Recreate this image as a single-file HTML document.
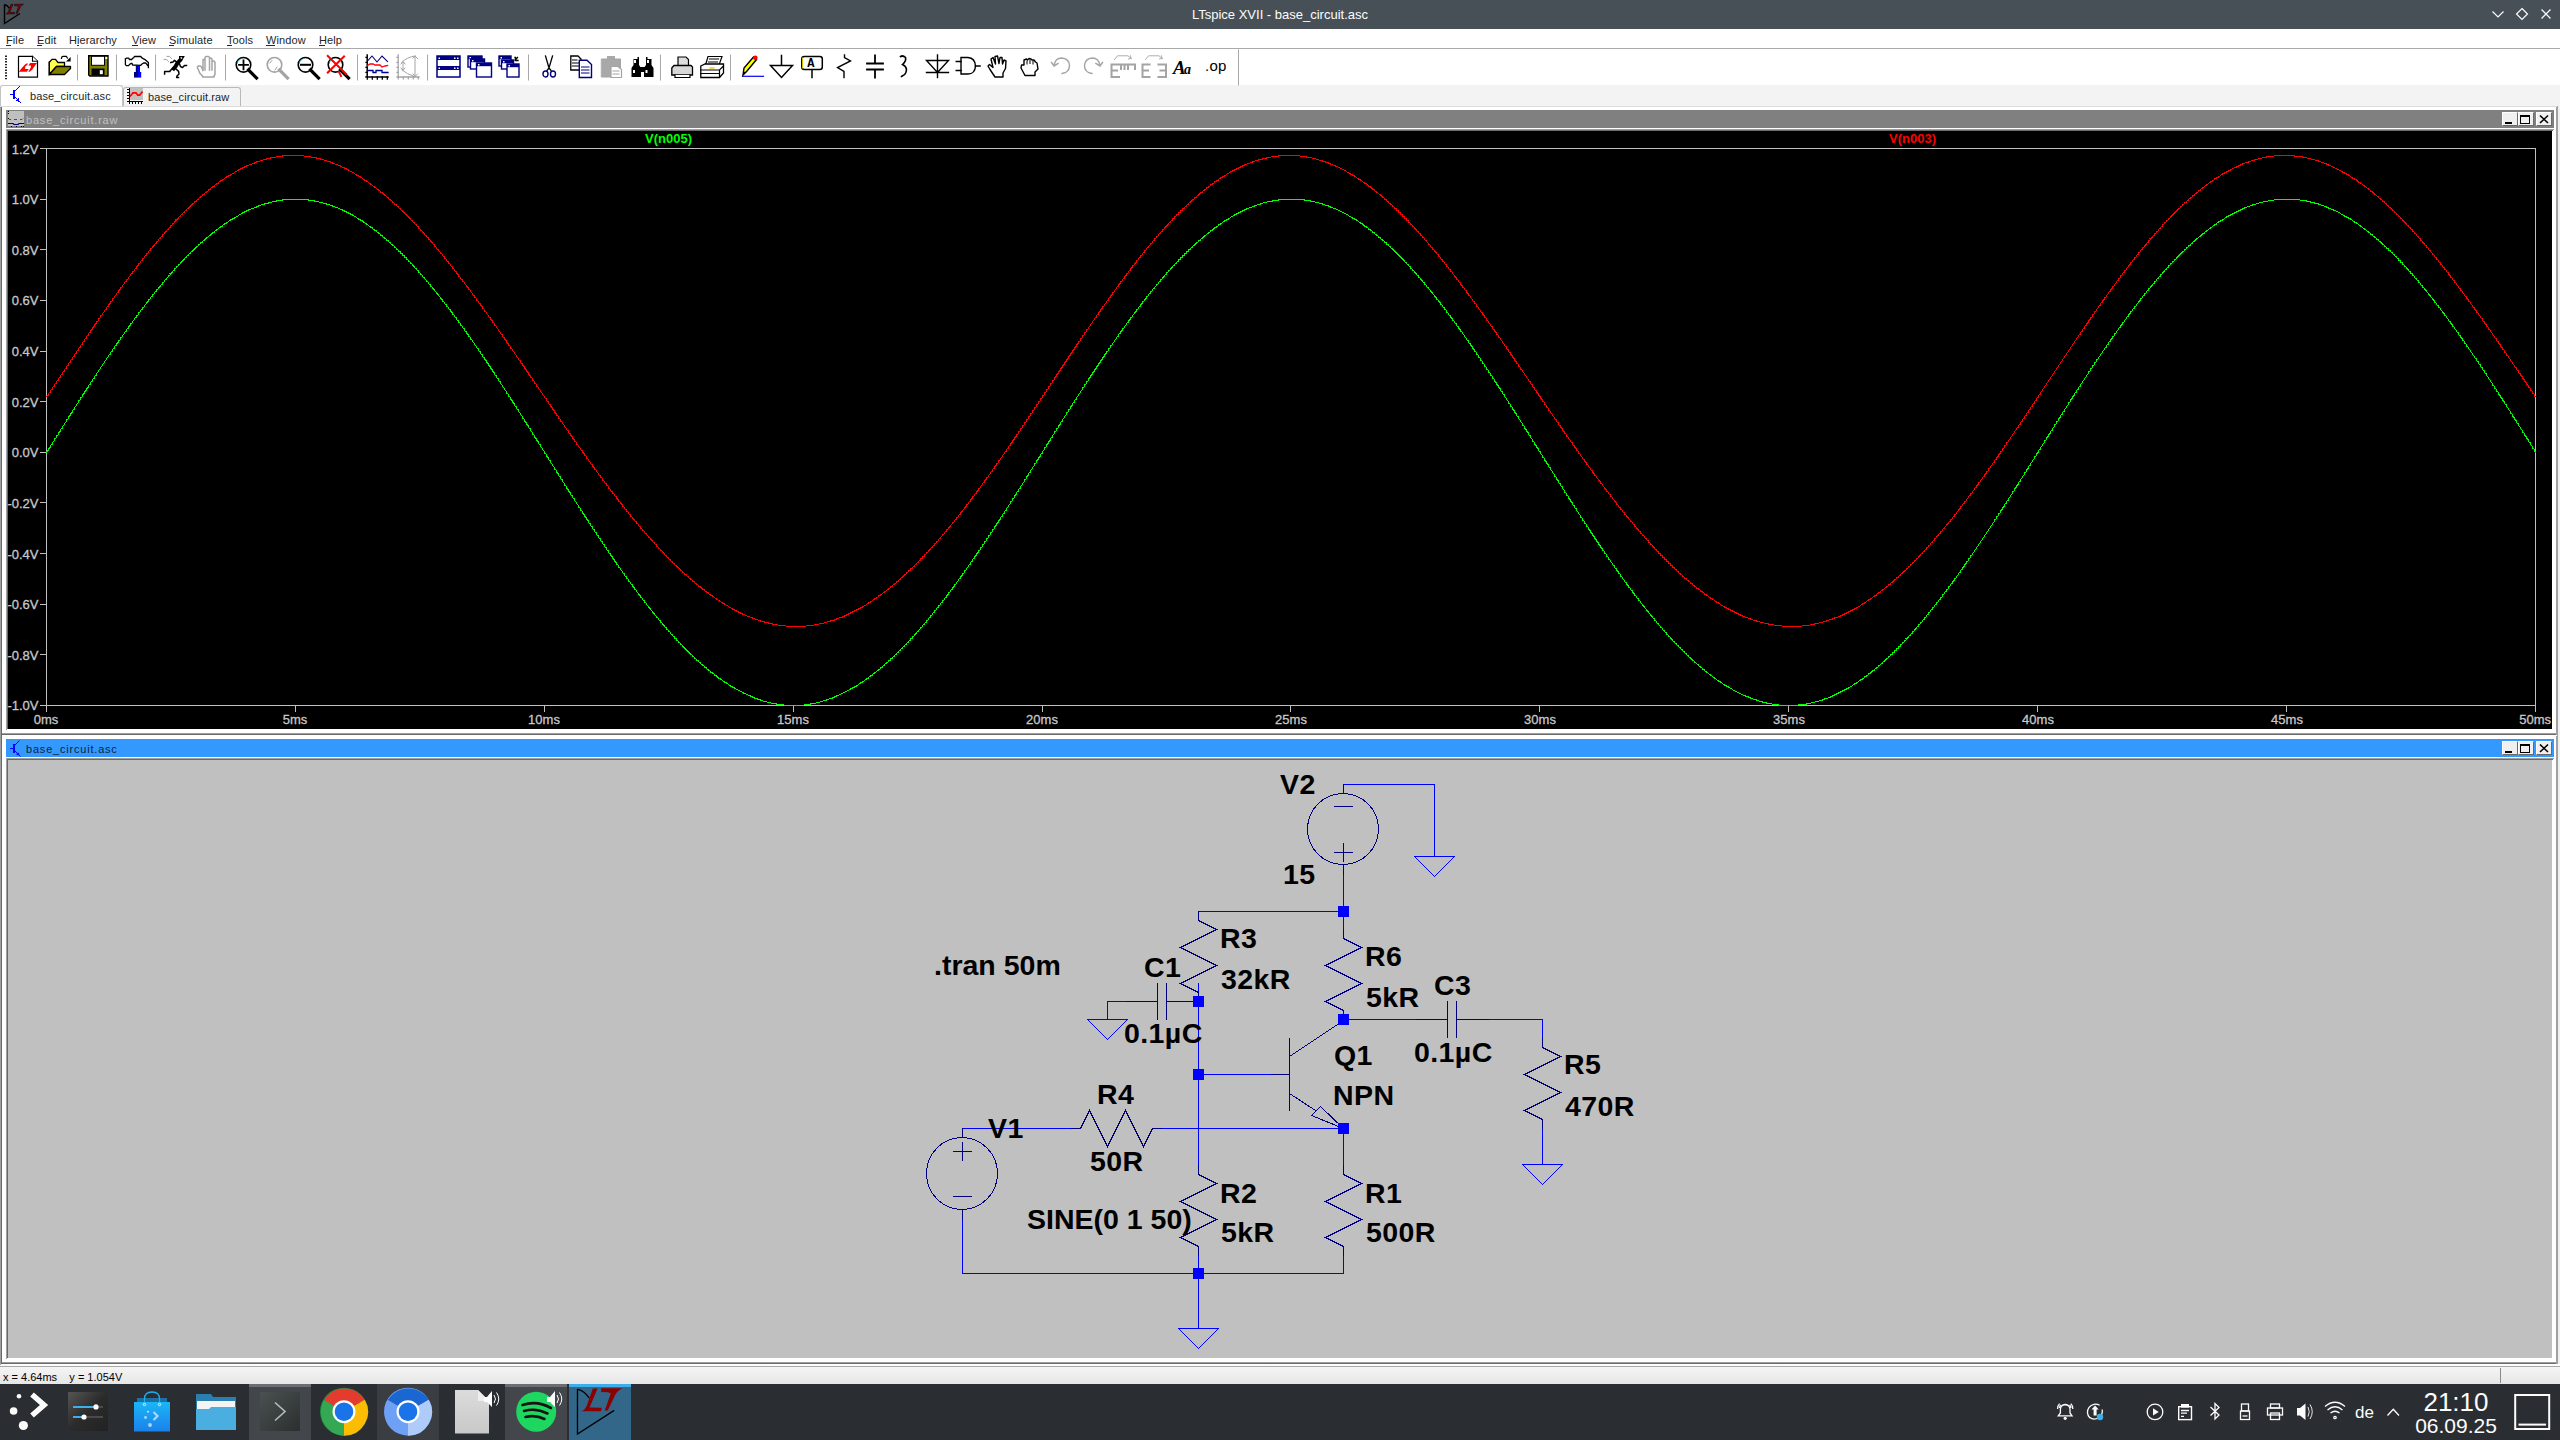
<!DOCTYPE html>
<html><head><meta charset="utf-8"><title>LTspice</title>
<style>
html,body{margin:0;padding:0;width:2560px;height:1440px;overflow:hidden;background:#ffffff;font-family:"Liberation Sans",sans-serif;}
.a{position:absolute;}
svg.full{position:absolute;left:0;top:0;}
</style></head><body>

<div class="a" style="left:0;top:0;width:2560px;height:29px;background:#475057"></div>
<div class="a" style="left:0;top:0;width:2560px;height:29px;line-height:29px;text-align:center;color:#fcfcfc;font-size:13px;">LTspice XVII - base_circuit.asc</div>
<svg class="full" width="2560" height="30" style="left:0;top:0">
<g stroke="#fcfcfc" stroke-width="1.2" fill="none">
<path d="M2492.5 11.5 L2498 17 L2503.5 11.5"/>
<path d="M2522 8.5 L2527.5 14 L2522 19.5 L2516.5 14 Z"/>
<path d="M2541.5 9.5 L2550.5 18.5 M2550.5 9.5 L2541.5 18.5"/>
</g>
<g>
<path d="M4.5 4.5 V23.5 L20 13.5 M4.5 4.5 Q7.5 5.3 9.5 8.3" fill="none" stroke="#000" stroke-width="1.4"/>
<path d="M11 4.3 H13 L9.6 12.3 Q12 12.3 14.8 12.4 L14.4 13.9 H6.2 Q8 12.9 8.5 11.3 Z" fill="#8b0000" stroke="#000" stroke-width="0.5"/>
<path d="M14.5 4.2 H23.5 Q21.2 5.3 20.4 7 L17.3 13.5 H16 L18.6 6.3 Q17 5.6 14.5 5.8 Z" fill="#8b0000" stroke="#000" stroke-width="0.5"/>
</g>
</svg>
<div class="a" style="left:0;top:29px;width:2560px;height:19px;background:#ffffff"></div>
<div class="a" style="left:0;top:48px;width:2560px;height:1px;background:#a9a9a9"></div>
<div class="a" style="left:6px;top:31px;font-size:11px;line-height:18px;color:#232627;letter-spacing:0.1px">File</div>
<div class="a" style="left:37px;top:31px;font-size:11px;line-height:18px;color:#232627;letter-spacing:0.1px">Edit</div>
<div class="a" style="left:69px;top:31px;font-size:11px;line-height:18px;color:#232627;letter-spacing:0.1px">Hierarchy</div>
<div class="a" style="left:132px;top:31px;font-size:11px;line-height:18px;color:#232627;letter-spacing:0.1px">View</div>
<div class="a" style="left:169px;top:31px;font-size:11px;line-height:18px;color:#232627;letter-spacing:0.1px">Simulate</div>
<div class="a" style="left:227px;top:31px;font-size:11px;line-height:18px;color:#232627;letter-spacing:0.1px">Tools</div>
<div class="a" style="left:266px;top:31px;font-size:11px;line-height:18px;color:#232627;letter-spacing:0.1px">Window</div>
<div class="a" style="left:319px;top:31px;font-size:11px;line-height:18px;color:#232627;letter-spacing:0.1px">Help</div>
<div class="a" style="left:6px;top:45px;width:5px;height:1px;background:#232627"></div>
<div class="a" style="left:37px;top:45px;width:5px;height:1px;background:#232627"></div>
<div class="a" style="left:77px;top:45px;width:2px;height:1px;background:#232627"></div>
<div class="a" style="left:132px;top:45px;width:6px;height:1px;background:#232627"></div>
<div class="a" style="left:169px;top:45px;width:5px;height:1px;background:#232627"></div>
<div class="a" style="left:227px;top:45px;width:5px;height:1px;background:#232627"></div>
<div class="a" style="left:266px;top:45px;width:9px;height:1px;background:#232627"></div>
<div class="a" style="left:319px;top:45px;width:6px;height:1px;background:#232627"></div>
<div class="a" style="left:0;top:49px;width:2560px;height:36px;background:#ffffff"></div>
<div class="a" style="left:0;top:85px;width:2560px;height:21px;background:#f3f3f3"></div>
<div class="a" style="left:0px;top:85px;width:123px;height:22px;background:#ffffff;border:1px solid #c4c4c4;border-bottom:none;border-radius:3px 3px 0 0;box-sizing:border-box"></div>
<div class="a" style="left:123px;top:87px;width:118px;height:19px;background:#f3f3f3;border:1px solid #b8b8b8;border-bottom:none;border-radius:3px 3px 0 0;box-sizing:border-box"></div>
<div class="a" style="left:30px;top:89px;font-size:11px;line-height:15px;color:#232627;letter-spacing:0.12px">base_circuit.asc</div>
<div class="a" style="left:148px;top:90px;font-size:11px;line-height:15px;color:#232627;letter-spacing:0.12px">base_circuit.raw</div>
<svg class="full" width="260" height="110" style="left:0;top:0" shape-rendering="crispEdges">
<g fill="#0000ff">
<rect x="13" y="90" width="2" height="9"/><rect x="10" y="94" width="3" height="1"/>
<rect x="15" y="90" width="1" height="1"/><rect x="16" y="89" width="1" height="1"/><rect x="17" y="88" width="1" height="1"/><rect x="18" y="87" width="1" height="1"/><rect x="19" y="86" width="1" height="1"/>
<rect x="15" y="97" width="1" height="1"/><rect x="16" y="98" width="1" height="1"/><rect x="17" y="99" width="2" height="2"/><rect x="16" y="100" width="2" height="1"/><rect x="18" y="98" width="1" height="2"/><rect x="18" y="101" width="2" height="1"/><rect x="20" y="102" width="1" height="1"/>
</g>
<rect x="130" y="88" width="13" height="12" fill="#c0c0c0"/>
<g fill="#000">
<rect x="129" y="88" width="1" height="16"/><rect x="127" y="101" width="16" height="1"/>
<rect x="127" y="89" width="2" height="1"/><rect x="127" y="92" width="2" height="1"/><rect x="127" y="95" width="2" height="1"/><rect x="127" y="98" width="2" height="1"/>
<rect x="132" y="102" width="1" height="2"/><rect x="135" y="102" width="1" height="2"/><rect x="138" y="102" width="1" height="2"/><rect x="141" y="102" width="1" height="2"/>
</g>
</svg>
<svg class="full" width="260" height="110" style="left:0;top:0"><path d="M130 96.5 L133 92.8 H136 L137.8 95.2 H139.7 L142.5 91.5" fill="none" stroke="#ff0000" stroke-width="1.7"/></svg>
<div class="a" style="left:0;top:1364px;width:2560px;height:2px;background:#fafafa"></div>
<div class="a" style="left:0;top:1366px;width:2560px;height:1px;background:#a8a8a8"></div>
<div class="a" style="left:0;top:1367px;width:2560px;height:17px;background:linear-gradient(#f5f5f5,#e6e6e6)"></div>
<div class="a" style="left:3px;top:1370px;font-size:11px;line-height:14px;color:#000;white-space:pre">x = 4.64ms    y = 1.054V</div>
<div class="a" style="left:2500px;top:1368px;width:1px;height:15px;background:#8a8a8a"></div>
<div class="a" style="left:0;top:106px;width:2560px;height:1259px;background:#ffffff"></div>
<div class="a" style="left:0;top:106px;width:1px;height:1259px;background:#a0a0a0"></div>
<div class="a" style="left:1px;top:106px;width:1px;height:1258px;background:#696969"></div>
<div class="a" style="left:0;top:106px;width:2560px;height:1px;background:#dcdcdc"></div>
<div class="a" style="left:2557px;top:106px;width:1px;height:1258px;background:#a0a0a0"></div>
<div class="a" style="left:2558px;top:106px;width:2px;height:1258px;background:#f0f0f0"></div>
<div class="a" style="left:2px;top:107px;width:2555px;height:628px;background:#ffffff"></div>
<div class="a" style="left:2px;top:733px;width:2555px;height:1px;background:#a0a0a0"></div>
<div class="a" style="left:2px;top:734px;width:2555px;height:1px;background:#696969"></div>
<div class="a" style="left:2556px;top:107px;width:1px;height:628px;background:#a0a0a0"></div>
<div class="a" style="left:6px;top:110px;width:2548px;height:18px;background:#808080"></div>
<div class="a" style="left:26px;top:112px;font-size:11px;line-height:16px;color:#c0c0c0;letter-spacing:0.8px">base_circuit.raw</div>
<div class="a" style="left:2502px;top:112px;width:16px;height:14px;background:#f0f0f0;box-sizing:border-box;border-top:1px solid #ffffff;border-left:1px solid #ffffff;border-right:1px solid #696969;border-bottom:1px solid #696969"></div>
<div class="a" style="left:2518px;top:112px;width:16px;height:14px;background:#f0f0f0;box-sizing:border-box;border-top:1px solid #ffffff;border-left:1px solid #ffffff;border-right:1px solid #696969;border-bottom:1px solid #696969"></div>
<div class="a" style="left:2536px;top:112px;width:16px;height:14px;background:#f0f0f0;box-sizing:border-box;border-top:1px solid #ffffff;border-left:1px solid #ffffff;border-right:1px solid #696969;border-bottom:1px solid #696969"></div>
<svg class="full" width="2560" height="130" style="left:0;top:0">
<rect x="2505" y="122" width="7" height="2" fill="#000"/>
<rect x="2520.5" y="115.5" width="9" height="8" fill="none" stroke="#000" stroke-width="1"/>
<rect x="2520" y="115" width="10" height="2" fill="#000"/>
<path d="M2540 115.5 L2548 123 M2548 115.5 L2540 123" stroke="#000" stroke-width="1.6"/>
<rect x="8" y="111" width="16" height="15" fill="#c0c0c0"/>
<g fill="#000"><rect x="8" y="111" width="1" height="1"/><rect x="8" y="113" width="1" height="1"/><rect x="8" y="118" width="1" height="1"/><rect x="8" y="123" width="1" height="1"/>
<rect x="11" y="126" width="1" height="1"/><rect x="16" y="126" width="1" height="1"/><rect x="21" y="126" width="1" height="1"/><rect x="23" y="126" width="1" height="1"/></g>
<path d="M9 119.5 h2 m3 0 h3 m3 0 h2 l1 -1" stroke="#ff0000" stroke-width="1" fill="none"/>
<path d="M9 123.5 h4 l1 1 h4 l1 -1 h5" stroke="#000080" stroke-width="1.2" fill="none"/>
</svg>
<div class="a" style="left:6px;top:129px;width:2548px;height:1px;background:#a0a0a0"></div>
<div class="a" style="left:6px;top:130px;width:2547px;height:1px;background:#696969"></div>
<div class="a" style="left:6px;top:129px;width:1px;height:601px;background:#a0a0a0"></div>
<div class="a" style="left:7px;top:130px;width:1px;height:599px;background:#696969"></div>
<div class="a" style="left:8px;top:131px;width:2544px;height:598px;background:#000000"></div>
<div class="a" style="left:2px;top:736px;width:2555px;height:628px;background:#ffffff"></div>
<div class="a" style="left:2px;top:1362px;width:2555px;height:1px;background:#a0a0a0"></div>
<div class="a" style="left:2px;top:1363px;width:2555px;height:1px;background:#696969"></div>
<div class="a" style="left:2556px;top:736px;width:1px;height:628px;background:#a0a0a0"></div>
<div class="a" style="left:6px;top:739px;width:2548px;height:18px;background:#3399ff"></div>
<div class="a" style="left:26px;top:741px;font-size:11px;line-height:16px;color:#10233a;letter-spacing:0.8px">base_circuit.asc</div>
<div class="a" style="left:2502px;top:741px;width:16px;height:14px;background:#f0f0f0;box-sizing:border-box;border-top:1px solid #ffffff;border-left:1px solid #ffffff;border-right:1px solid #696969;border-bottom:1px solid #696969"></div>
<div class="a" style="left:2518px;top:741px;width:16px;height:14px;background:#f0f0f0;box-sizing:border-box;border-top:1px solid #ffffff;border-left:1px solid #ffffff;border-right:1px solid #696969;border-bottom:1px solid #696969"></div>
<div class="a" style="left:2536px;top:741px;width:16px;height:14px;background:#f0f0f0;box-sizing:border-box;border-top:1px solid #ffffff;border-left:1px solid #ffffff;border-right:1px solid #696969;border-bottom:1px solid #696969"></div>
<svg class="full" width="2560" height="759" style="left:0;top:0">
<rect x="2505" y="751" width="7" height="2" fill="#000"/>
<rect x="2520.5" y="744.5" width="9" height="8" fill="none" stroke="#000" stroke-width="1"/>
<rect x="2520" y="744" width="10" height="2" fill="#000"/>
<path d="M2540 744.5 L2548 752 M2548 744.5 L2540 752" stroke="#000" stroke-width="1.6"/>
<g fill="#0000ff"><rect x="13" y="744" width="2" height="9"/><rect x="10" y="748" width="3" height="1"/>
<path d="M15 745 L19.5 740.5" stroke="#0000ff" stroke-width="1"/><path d="M15 751 L20.5 756.5" stroke="#0000ff" stroke-width="1"/>
<path d="M16 754.5 L18.5 752.5 L19.5 755.5 Z"/></g>
</svg>
<div class="a" style="left:6px;top:758px;width:2548px;height:1px;background:#a0a0a0"></div>
<div class="a" style="left:6px;top:759px;width:2547px;height:1px;background:#696969"></div>
<div class="a" style="left:6px;top:758px;width:1px;height:601px;background:#a0a0a0"></div>
<div class="a" style="left:7px;top:759px;width:1px;height:599px;background:#696969"></div>
<div class="a" style="left:8px;top:760px;width:2544px;height:598px;background:#c0c0c0"></div>
<svg class="full" width="2560" height="740" style="left:0;top:0" shape-rendering="crispEdges">
<path d="M46.5 148.5 H2535.5 V705.5 H46.5 Z" stroke="#c0c0c0" stroke-width="1" fill="none"/>
<path d="M40 148.5 H46.5 M40 199.5 H46.5 M40 249.5 H46.5 M40 300.5 H46.5 M40 351.5 H46.5 M40 401.5 H46.5 M40 452.5 H46.5 M40 502.5 H46.5 M40 553.5 H46.5 M40 604.5 H46.5 M40 654.5 H46.5 M40 705.5 H46.5 M46.5 705.5 V712 M295.5 705.5 V712 M544.5 705.5 V712 M793.5 705.5 V712 M1042.5 705.5 V712 M1290.5 705.5 V712 M1539.5 705.5 V712 M1788.5 705.5 V712 M2037.5 705.5 V712 M2286.5 705.5 V712 M2535.5 705.5 V712" stroke="#c0c0c0" stroke-width="1" fill="none"/>
<polyline points="46 397.0 48 395.5 48 394.0 50 392.4 50 390.9 52 389.4 52 387.9 54 386.4 54 384.9 56 383.4 56 381.9 58 380.4 58 378.9 60 377.3 60 375.8 62 374.3 62 372.8 64 371.3 64 369.8 66 368.3 66 366.8 68 365.3 68 363.8 70 362.3 70 360.8 72 359.3 72 357.8 74 356.3 74 354.8 76 353.3 76 351.8 78 350.3 78 348.8 80 347.3 80 345.8 82 344.3 82 342.9 84 341.4 84 339.9 86 338.4 86 336.9 88 335.5 88 334.0 90 332.5 90 331.0 92 329.6 92 328.1 94 326.6 94 325.2 96 323.7 96 322.3 98 320.8 98 319.4 100 317.9 100 316.5 102 315.0 102 313.6 104 312.2 104 310.7 106 309.3 106 307.9 108 306.5 108 305.0 110 303.6 110 302.2 112 300.8 112 299.4 114 298.0 114 296.6 116 295.2 116 293.8 118 292.4 118 291.1 120 289.7 120 288.3 122 286.9 122 285.6 124 284.2 124 282.9 126 281.5 126 280.2 128 278.8 128 277.5 130 276.2 130 274.8 132 273.5 132 272.2 134 270.9 134 269.6 136 268.3 136 267.0 138 265.7 138 264.4 140 263.1 140 261.8 142 260.5 142 259.3 144 258.0 144 256.8 146 255.5 146 254.3 148 253.0 148 251.8 150 250.6 150 249.3 152 248.1 152 246.9 154 245.7 154 244.5 156 243.3 156 242.1 158 240.9 158 239.8 160 238.6 160 237.4 162 236.3 162 235.1 164 234.0 164 232.9 166 231.7 166 230.6 168 229.5 168 228.4 170 227.3 170 226.2 172 225.1 172 224.0 174 222.9 174 221.9 176 220.8 176 219.8 178 218.7 178 217.7 180 216.6 180 215.6 182 214.6 182 213.6 184 212.6 184 211.6 186 210.6 186 209.6 188 208.7 188 207.7 190 206.7 190 205.8 192 204.8 192 203.9 194 203.0 194 202.1 196 201.2 196 200.3 198 199.4 198 198.5 200 197.6 200 196.7 202 195.9 202 195.0 204 194.2 204 193.3 206 192.5 206 191.7 208 190.9 208 190.1 210 189.3 210 188.5 212 187.7 212 187.0 214 186.2 214 185.4 216 184.7 216 184.0 218 183.2 218 182.5 220 181.8 220 181.1 222 180.4 222 179.7 224 179.1 224 178.4 226 177.8 226 177.1 228 176.5 228 175.9 230 175.2 230 174.6 232 174.0 232 173.4 234 172.9 234 172.3 236 171.7 236 171.2 238 170.6 238 170.1 240 169.6 240 169.0 242 168.5 242 168.0 244 167.5 244 167.1 246 166.6 246 166.1 248 165.7 248 165.3 250 164.8 250 164.4 252 164.0 252 163.6 254 163.2 254 162.8 256 162.4 256 162.1 258 161.7 258 161.4 260 161.0 260 160.7 262 160.4 262 160.1 264 159.8 264 159.5 266 159.2 266 159.0 268 158.7 268 158.5 270 158.2 270 158.0 272 157.8 272 157.6 274 157.4 274 157.2 276 157.0 276 156.8 278 156.7 278 156.5 280 156.4 280 156.2 282 156.1 282 156.0 284 155.9 284 155.8 286 155.7 286 155.7 288 155.6 288 155.6 290 155.5 290 155.5 292 155.5 292 155.5 294 155.5 294 155.5 296 155.5 296 155.5 298 155.6 298 155.6 300 155.7 300 155.7 302 155.8 302 155.9 304 156.0 304 156.1 306 156.2 306 156.3 308 156.5 308 156.6 310 156.8 310 156.9 312 157.1 312 157.3 314 157.5 314 157.7 316 157.9 316 158.1 318 158.4 318 158.6 320 158.9 320 159.1 322 159.4 322 159.7 324 160.0 324 160.3 326 160.6 326 160.9 328 161.2 328 161.6 330 161.9 330 162.3 332 162.7 332 163.0 334 163.4 334 163.8 336 164.2 336 164.6 338 165.1 338 165.5 340 165.9 340 166.4 342 166.9 342 167.3 344 167.8 344 168.3 346 168.8 346 169.3 348 169.8 348 170.3 350 170.9 350 171.4 352 172.0 352 172.5 354 173.1 354 173.7 356 174.3 356 174.9 358 175.5 358 176.1 360 176.7 360 177.3 362 178.0 362 178.6 364 179.3 364 180.0 366 180.6 366 181.3 368 182.0 368 182.7 370 183.4 370 184.1 372 184.9 372 185.6 374 186.3 374 187.1 376 187.9 376 188.6 378 189.4 378 190.2 380 191.0 380 191.8 382 192.6 382 193.4 384 194.2 384 195.1 386 195.9 386 196.7 388 197.6 388 198.5 390 199.3 390 200.2 392 201.1 392 202.0 394 202.9 394 203.8 396 204.7 396 205.6 398 206.6 398 207.5 400 208.5 400 209.4 402 210.4 402 211.3 404 212.3 404 213.3 406 214.3 406 215.3 408 216.3 408 217.3 410 218.3 410 219.3 412 220.4 412 221.4 414 222.5 414 223.5 416 224.6 416 225.6 418 226.7 418 227.8 420 228.9 420 229.9 422 231.0 422 232.1 424 233.3 424 234.4 426 235.5 426 236.6 428 237.7 428 238.9 430 240.0 430 241.2 432 242.3 432 243.5 434 244.7 434 245.8 436 247.0 436 248.2 438 249.4 438 250.6 440 251.8 440 253.0 442 254.2 442 255.4 444 256.7 444 257.9 446 259.1 446 260.4 448 261.6 448 262.8 450 264.1 450 265.4 452 266.6 452 267.9 454 269.2 454 270.4 456 271.7 456 273.0 458 274.3 458 275.6 460 276.9 460 278.2 462 279.5 462 280.8 464 282.1 464 283.4 466 284.8 466 286.1 468 287.4 468 288.8 470 290.1 470 291.4 472 292.8 472 294.1 474 295.5 474 296.8 476 298.2 476 299.6 478 300.9 478 302.3 480 303.7 480 305.1 482 306.4 482 307.8 484 309.2 484 310.6 486 312.0 486 313.4 488 314.8 488 316.2 490 317.6 490 319.0 492 320.4 492 321.8 494 323.2 494 324.6 496 326.1 496 327.5 498 328.9 498 330.3 500 331.8 500 333.2 502 334.6 502 336.1 504 337.5 504 338.9 506 340.4 506 341.8 508 343.3 508 344.7 510 346.1 510 347.6 512 349.0 512 350.5 514 351.9 514 353.4 516 354.8 516 356.3 518 357.8 518 359.2 520 360.7 520 362.1 522 363.6 522 365.0 524 366.5 524 368.0 526 369.4 526 370.9 528 372.4 528 373.8 530 375.3 530 376.8 532 378.2 532 379.7 534 381.1 534 382.6 536 384.1 536 385.5 538 387.0 538 388.5 540 389.9 540 391.4 542 392.9 542 394.3 544 395.8 544 397.3 546 398.7 546 400.2 548 401.7 548 403.1 550 404.6 550 406.0 552 407.5 552 409.0 554 410.4 554 411.9 556 413.3 556 414.8 558 416.2 558 417.7 560 419.1 560 420.6 562 422.0 562 423.5 564 424.9 564 426.4 566 427.8 566 429.2 568 430.7 568 432.1 570 433.6 570 435.0 572 436.4 572 437.8 574 439.3 574 440.7 576 442.1 576 443.5 578 445.0 578 446.4 580 447.8 580 449.2 582 450.6 582 452.0 584 453.4 584 454.8 586 456.2 586 457.6 588 459.0 588 460.4 590 461.8 590 463.2 592 464.6 592 465.9 594 467.3 594 468.7 596 470.1 596 471.4 598 472.8 598 474.2 600 475.5 600 476.9 602 478.2 602 479.6 604 480.9 604 482.2 606 483.6 606 484.9 608 486.2 608 487.6 610 488.9 610 490.2 612 491.5 612 492.8 614 494.1 614 495.4 616 496.7 616 498.0 618 499.3 618 500.6 620 501.9 620 503.1 622 504.4 622 505.7 624 506.9 624 508.2 626 509.5 626 510.7 628 512.0 628 513.2 630 514.4 630 515.7 632 516.9 632 518.1 634 519.3 634 520.5 636 521.7 636 522.9 638 524.1 638 525.3 640 526.5 640 527.7 642 528.9 642 530.0 644 531.2 644 532.3 646 533.5 646 534.6 648 535.8 648 536.9 650 538.1 650 539.2 652 540.3 652 541.4 654 542.5 654 543.6 656 544.7 656 545.8 658 546.9 658 548.0 660 549.0 660 550.1 662 551.2 662 552.2 664 553.3 664 554.3 666 555.4 666 556.4 668 557.4 668 558.4 670 559.4 670 560.4 672 561.4 672 562.4 674 563.4 674 564.4 676 565.4 676 566.3 678 567.3 678 568.2 680 569.2 680 570.1 682 571.1 682 572.0 684 572.9 684 573.8 686 574.7 686 575.6 688 576.5 688 577.4 690 578.3 690 579.1 692 580.0 692 580.9 694 581.7 694 582.6 696 583.4 696 584.2 698 585.0 698 585.9 700 586.7 700 587.5 702 588.2 702 589.0 704 589.8 704 590.6 706 591.3 706 592.1 708 592.8 708 593.6 710 594.3 710 595.0 712 595.7 712 596.4 714 597.1 714 597.8 716 598.5 716 599.2 718 599.9 718 600.5 720 601.2 720 601.8 722 602.5 722 603.1 724 603.7 724 604.3 726 604.9 726 605.5 728 606.1 728 606.7 730 607.3 730 607.8 732 608.4 732 609.0 734 609.5 734 610.0 736 610.6 736 611.1 738 611.6 738 612.1 740 612.6 740 613.1 742 613.5 742 614.0 744 614.5 744 614.9 746 615.3 746 615.8 748 616.2 748 616.6 750 617.0 750 617.4 752 617.8 752 618.2 754 618.6 754 618.9 756 619.3 756 619.6 758 620.0 758 620.3 760 620.6 760 621.0 762 621.3 762 621.6 764 621.8 764 622.1 766 622.4 766 622.7 768 622.9 768 623.2 770 623.4 770 623.6 772 623.8 772 624.0 774 624.2 774 624.4 776 624.6 776 624.8 778 625.0 778 625.1 780 625.3 780 625.4 782 625.5 782 625.7 784 625.8 784 625.9 786 626.0 786 626.1 788 626.1 788 626.2 790 626.3 790 626.3 792 626.4 792 626.4 794 626.4 794 626.4 796 626.4 796 626.4 798 626.4 798 626.4 800 626.4 800 626.3 802 626.3 802 626.2 804 626.2 804 626.1 806 626.0 806 625.9 808 625.8 808 625.7 810 625.6 810 625.5 812 625.3 812 625.2 814 625.0 814 624.9 816 624.7 816 624.5 818 624.3 818 624.1 820 623.9 820 623.7 822 623.5 822 623.2 824 623.0 824 622.7 826 622.5 826 622.2 828 621.9 828 621.6 830 621.3 830 621.0 832 620.7 832 620.4 834 620.1 834 619.7 836 619.4 836 619.0 838 618.7 838 618.3 840 617.9 840 617.5 842 617.1 842 616.7 844 616.3 844 615.9 846 615.4 846 615.0 848 614.5 848 614.1 850 613.6 850 613.1 852 612.6 852 612.1 854 611.6 854 611.1 856 610.6 856 610.0 858 609.5 858 609.0 860 608.4 860 607.8 862 607.3 862 606.7 864 606.1 864 605.5 866 604.9 866 604.3 868 603.7 868 603.0 870 602.4 870 601.7 872 601.1 872 600.4 874 599.7 874 599.1 876 598.4 876 597.7 878 597.0 878 596.2 880 595.5 880 594.8 882 594.1 882 593.3 884 592.6 884 591.8 886 591.0 886 590.3 888 589.5 888 588.7 890 587.9 890 587.1 892 586.2 892 585.4 894 584.6 894 583.7 896 582.9 896 582.0 898 581.2 898 580.3 900 579.4 900 578.5 902 577.7 902 576.8 904 575.8 904 574.9 906 574.0 906 573.1 908 572.1 908 571.2 910 570.2 910 569.3 912 568.3 912 567.3 914 566.4 914 565.4 916 564.4 916 563.4 918 562.4 918 561.4 920 560.3 920 559.3 922 558.3 922 557.2 924 556.2 924 555.1 926 554.1 926 553.0 928 551.9 928 550.8 930 549.8 930 548.7 932 547.6 932 546.4 934 545.3 934 544.2 936 543.1 936 542.0 938 540.8 938 539.7 940 538.5 940 537.4 942 536.2 942 535.0 944 533.8 944 532.7 946 531.5 946 530.3 948 529.1 948 527.9 950 526.7 950 525.5 952 524.2 952 523.0 954 521.8 954 520.5 956 519.3 956 518.0 958 516.8 958 515.5 960 514.3 960 513.0 962 511.7 962 510.4 964 509.2 964 507.9 966 506.6 966 505.3 968 504.0 968 502.7 970 501.3 970 500.0 972 498.7 972 497.4 974 496.0 974 494.7 976 493.4 976 492.0 978 490.7 978 489.3 980 488.0 980 486.6 982 485.2 982 483.9 984 482.5 984 481.1 986 479.7 986 478.3 988 476.9 988 475.6 990 474.2 990 472.8 992 471.4 992 469.9 994 468.5 994 467.1 996 465.7 996 464.3 998 462.9 998 461.4 1000 460.0 1000 458.6 1002 457.1 1002 455.7 1004 454.2 1004 452.8 1006 451.4 1006 449.9 1008 448.4 1008 447.0 1010 445.5 1010 444.1 1012 442.6 1012 441.1 1014 439.7 1014 438.2 1016 436.7 1016 435.3 1018 433.8 1018 432.3 1020 430.8 1020 429.3 1022 427.9 1022 426.4 1024 424.9 1024 423.4 1026 421.9 1026 420.4 1028 418.9 1028 417.4 1030 415.9 1030 414.4 1032 412.9 1032 411.4 1034 409.9 1034 408.4 1036 406.9 1036 405.4 1038 403.9 1038 402.4 1040 400.9 1040 399.4 1042 397.9 1042 396.4 1044 394.9 1044 393.4 1046 391.8 1046 390.3 1048 388.8 1048 387.3 1050 385.8 1050 384.3 1052 382.8 1052 381.3 1054 379.8 1054 378.3 1056 376.7 1056 375.2 1058 373.7 1058 372.2 1060 370.7 1060 369.2 1062 367.7 1062 366.2 1064 364.7 1064 363.2 1066 361.7 1066 360.2 1068 358.7 1068 357.2 1070 355.7 1070 354.2 1072 352.7 1072 351.2 1074 349.7 1074 348.2 1076 346.7 1076 345.2 1078 343.7 1078 342.3 1080 340.8 1080 339.3 1082 337.8 1082 336.3 1084 334.9 1084 333.4 1086 331.9 1086 330.5 1088 329.0 1088 327.5 1090 326.1 1090 324.6 1092 323.1 1092 321.7 1094 320.2 1094 318.8 1096 317.4 1096 315.9 1098 314.5 1098 313.0 1100 311.6 1100 310.2 1102 308.7 1102 307.3 1104 305.9 1104 304.5 1106 303.1 1106 301.7 1108 300.3 1108 298.9 1110 297.5 1110 296.1 1112 294.7 1112 293.3 1114 291.9 1114 290.5 1116 289.1 1116 287.8 1118 286.4 1118 285.0 1120 283.7 1120 282.3 1122 281.0 1122 279.6 1124 278.3 1124 277.0 1126 275.6 1126 274.3 1128 273.0 1128 271.7 1130 270.3 1130 269.0 1132 267.7 1132 266.4 1134 265.1 1134 263.9 1136 262.6 1136 261.3 1138 260.0 1138 258.8 1140 257.5 1140 256.3 1142 255.0 1142 253.8 1144 252.5 1144 251.3 1146 250.1 1146 248.8 1148 247.6 1148 246.4 1150 245.2 1150 244.0 1152 242.8 1152 241.6 1154 240.5 1154 239.3 1156 238.1 1156 237.0 1158 235.8 1158 234.7 1160 233.5 1160 232.4 1162 231.3 1162 230.2 1164 229.0 1164 227.9 1166 226.8 1166 225.7 1168 224.7 1168 223.6 1170 222.5 1170 221.4 1172 220.4 1172 219.3 1174 218.3 1174 217.3 1176 216.2 1176 215.2 1178 214.2 1178 213.2 1180 212.2 1180 211.2 1182 210.2 1182 209.2 1184 208.3 1184 207.3 1186 206.4 1186 205.4 1188 204.5 1188 203.5 1190 202.6 1190 201.7 1192 200.8 1192 199.9 1194 199.0 1194 198.1 1196 197.3 1196 196.4 1198 195.5 1198 194.7 1200 193.8 1200 193.0 1202 192.2 1202 191.4 1204 190.6 1204 189.8 1206 189.0 1206 188.2 1208 187.4 1208 186.6 1210 185.9 1210 185.1 1212 184.4 1212 183.7 1214 183.0 1214 182.2 1216 181.5 1216 180.8 1218 180.2 1218 179.5 1220 178.8 1220 178.2 1222 177.5 1222 176.9 1224 176.2 1224 175.6 1226 175.0 1226 174.4 1228 173.8 1228 173.2 1230 172.6 1230 172.1 1232 171.5 1232 170.9 1234 170.4 1234 169.9 1236 169.4 1236 168.8 1238 168.3 1238 167.8 1240 167.4 1240 166.9 1242 166.4 1242 166.0 1244 165.5 1244 165.1 1246 164.6 1246 164.2 1248 163.8 1248 163.4 1250 163.0 1250 162.7 1252 162.3 1252 161.9 1254 161.6 1254 161.2 1256 160.9 1256 160.6 1258 160.3 1258 160.0 1260 159.7 1260 159.4 1262 159.1 1262 158.9 1264 158.6 1264 158.4 1266 158.1 1266 157.9 1268 157.7 1268 157.5 1270 157.3 1270 157.1 1272 156.9 1272 156.8 1274 156.6 1274 156.5 1276 156.3 1276 156.2 1278 156.1 1278 156.0 1280 155.9 1280 155.8 1282 155.7 1282 155.7 1284 155.6 1284 155.6 1286 155.5 1286 155.5 1288 155.5 1288 155.5 1290 155.5 1290 155.5 1292 155.5 1292 155.5 1294 155.6 1294 155.6 1296 155.7 1296 155.8 1298 155.8 1298 155.9 1300 156.0 1300 156.1 1302 156.3 1302 156.4 1304 156.5 1304 156.7 1306 156.8 1306 157.0 1308 157.2 1308 157.4 1310 157.6 1310 157.8 1312 158.0 1312 158.2 1314 158.5 1314 158.7 1316 159.0 1316 159.2 1318 159.5 1318 159.8 1320 160.1 1320 160.4 1322 160.7 1322 161.0 1324 161.4 1324 161.7 1326 162.1 1326 162.4 1328 162.8 1328 163.2 1330 163.6 1330 164.0 1332 164.4 1332 164.8 1334 165.2 1334 165.7 1336 166.1 1336 166.6 1338 167.0 1338 167.5 1340 168.0 1340 168.5 1342 169.0 1342 169.5 1344 170.0 1344 170.6 1346 171.1 1346 171.6 1348 172.2 1348 172.8 1350 173.3 1350 173.9 1352 174.5 1352 175.1 1354 175.7 1354 176.3 1356 177.0 1356 177.6 1358 178.2 1358 178.9 1360 179.6 1360 180.2 1362 180.9 1362 181.6 1364 182.3 1364 183.0 1366 183.7 1366 184.4 1368 185.2 1368 185.9 1370 186.6 1370 187.4 1372 188.2 1372 188.9 1374 189.7 1374 190.5 1376 191.3 1376 192.1 1378 192.9 1378 193.7 1380 194.6 1380 195.4 1382 196.2 1382 197.1 1384 197.9 1384 198.8 1386 199.7 1386 200.6 1388 201.5 1388 202.4 1390 203.3 1390 204.2 1392 205.1 1392 206.0 1394 207.0 1394 207.9 1396 208.8 1396 209.8 1398 210.8 1398 211.7 1400 212.7 1400 213.7 1402 214.7 1402 215.7 1404 216.7 1404 217.7 1406 218.7 1406 219.8 1408 220.8 1408 221.8 1410 222.9 1410 223.9 1412 225.0 1412 226.1 1414 227.1 1414 228.2 1416 229.3 1416 230.4 1418 231.5 1418 232.6 1420 233.7 1420 234.8 1422 235.9 1422 237.1 1424 238.2 1424 239.3 1426 240.5 1426 241.6 1428 242.8 1428 244.0 1430 245.1 1430 246.3 1432 247.5 1432 248.7 1434 249.9 1434 251.1 1436 252.3 1436 253.5 1438 254.7 1438 255.9 1440 257.1 1440 258.4 1442 259.6 1442 260.8 1444 262.1 1444 263.3 1446 264.6 1446 265.9 1448 267.1 1448 268.4 1450 269.7 1450 270.9 1452 272.2 1452 273.5 1454 274.8 1454 276.1 1456 277.4 1456 278.7 1458 280.0 1458 281.3 1460 282.6 1460 284.0 1462 285.3 1462 286.6 1464 288.0 1464 289.3 1466 290.6 1466 292.0 1468 293.3 1468 294.7 1470 296.0 1470 297.4 1472 298.8 1472 300.1 1474 301.5 1474 302.9 1476 304.2 1476 305.6 1478 307.0 1478 308.4 1480 309.8 1480 311.2 1482 312.6 1482 313.9 1484 315.3 1484 316.8 1486 318.2 1486 319.6 1488 321.0 1488 322.4 1490 323.8 1490 325.2 1492 326.6 1492 328.1 1494 329.5 1494 330.9 1496 332.3 1496 333.8 1498 335.2 1498 336.6 1500 338.1 1500 339.5 1502 340.9 1502 342.4 1504 343.8 1504 345.3 1506 346.7 1506 348.2 1508 349.6 1508 351.1 1510 352.5 1510 354.0 1512 355.4 1512 356.9 1514 358.3 1514 359.8 1516 361.3 1516 362.7 1518 364.2 1518 365.6 1520 367.1 1520 368.6 1522 370.0 1522 371.5 1524 372.9 1524 374.4 1526 375.9 1526 377.3 1528 378.8 1528 380.3 1530 381.7 1530 383.2 1532 384.7 1532 386.1 1534 387.6 1534 389.1 1536 390.5 1536 392.0 1538 393.5 1538 394.9 1540 396.4 1540 397.9 1542 399.3 1542 400.8 1544 402.2 1544 403.7 1546 405.2 1546 406.6 1548 408.1 1548 409.5 1550 411.0 1550 412.4 1552 413.9 1552 415.4 1554 416.8 1554 418.3 1556 419.7 1556 421.2 1558 422.6 1558 424.1 1560 425.5 1560 426.9 1562 428.4 1562 429.8 1564 431.3 1564 432.7 1566 434.1 1566 435.6 1568 437.0 1568 438.4 1570 439.8 1570 441.3 1572 442.7 1572 444.1 1574 445.5 1574 446.9 1576 448.4 1576 449.8 1578 451.2 1578 452.6 1580 454.0 1580 455.4 1582 456.8 1582 458.2 1584 459.6 1584 461.0 1586 462.4 1586 463.7 1588 465.1 1588 466.5 1590 467.9 1590 469.2 1592 470.6 1592 472.0 1594 473.3 1594 474.7 1596 476.1 1596 477.4 1598 478.8 1598 480.1 1600 481.4 1600 482.8 1602 484.1 1602 485.4 1604 486.8 1604 488.1 1606 489.4 1606 490.7 1608 492.0 1608 493.3 1610 494.6 1610 495.9 1612 497.2 1612 498.5 1614 499.8 1614 501.1 1616 502.4 1616 503.7 1618 504.9 1618 506.2 1620 507.5 1620 508.7 1622 510.0 1622 511.2 1624 512.4 1624 513.7 1626 514.9 1626 516.1 1628 517.4 1628 518.6 1630 519.8 1630 521.0 1632 522.2 1632 523.4 1634 524.6 1634 525.8 1636 527.0 1636 528.2 1638 529.3 1638 530.5 1640 531.7 1640 532.8 1642 534.0 1642 535.1 1644 536.2 1644 537.4 1646 538.5 1646 539.6 1648 540.7 1648 541.9 1650 543.0 1650 544.1 1652 545.2 1652 546.2 1654 547.3 1654 548.4 1656 549.5 1656 550.5 1658 551.6 1658 552.7 1660 553.7 1660 554.7 1662 555.8 1662 556.8 1664 557.8 1664 558.8 1666 559.8 1666 560.8 1668 561.8 1668 562.8 1670 563.8 1670 564.8 1672 565.8 1672 566.7 1674 567.7 1674 568.6 1676 569.6 1676 570.5 1678 571.4 1678 572.4 1680 573.3 1680 574.2 1682 575.1 1682 576.0 1684 576.9 1684 577.8 1686 578.6 1686 579.5 1688 580.4 1688 581.2 1690 582.1 1690 582.9 1692 583.7 1692 584.5 1694 585.4 1694 586.2 1696 587.0 1696 587.8 1698 588.6 1698 589.3 1700 590.1 1700 590.9 1702 591.6 1702 592.4 1704 593.1 1704 593.9 1706 594.6 1706 595.3 1708 596.0 1708 596.7 1710 597.4 1710 598.1 1712 598.8 1712 599.5 1714 600.1 1714 600.8 1716 601.4 1716 602.1 1718 602.7 1718 603.3 1720 604.0 1720 604.6 1722 605.2 1722 605.8 1724 606.4 1724 606.9 1726 607.5 1726 608.1 1728 608.6 1728 609.2 1730 609.7 1730 610.2 1732 610.8 1732 611.3 1734 611.8 1734 612.3 1736 612.8 1736 613.2 1738 613.7 1738 614.2 1740 614.6 1740 615.1 1742 615.5 1742 615.9 1744 616.4 1744 616.8 1746 617.2 1746 617.6 1748 618.0 1748 618.4 1750 618.7 1750 619.1 1752 619.4 1752 619.8 1754 620.1 1754 620.4 1756 620.8 1756 621.1 1758 621.4 1758 621.7 1760 622.0 1760 622.2 1762 622.5 1762 622.8 1764 623.0 1764 623.2 1766 623.5 1766 623.7 1768 623.9 1768 624.1 1770 624.3 1770 624.5 1772 624.7 1772 624.9 1774 625.0 1774 625.2 1776 625.3 1776 625.5 1778 625.6 1778 625.7 1780 625.8 1780 625.9 1782 626.0 1782 626.1 1784 626.2 1784 626.2 1786 626.3 1786 626.3 1788 626.4 1788 626.4 1790 626.4 1790 626.4 1792 626.4 1792 626.4 1794 626.4 1794 626.4 1796 626.4 1796 626.3 1798 626.3 1798 626.2 1800 626.1 1800 626.1 1802 626.0 1802 625.9 1804 625.8 1804 625.7 1806 625.5 1806 625.4 1808 625.3 1808 625.1 1810 625.0 1810 624.8 1812 624.6 1812 624.4 1814 624.2 1814 624.0 1816 623.8 1816 623.6 1818 623.4 1818 623.1 1820 622.9 1820 622.6 1822 622.4 1822 622.1 1824 621.8 1824 621.5 1826 621.2 1826 620.9 1828 620.6 1828 620.3 1830 619.9 1830 619.6 1832 619.2 1832 618.9 1834 618.5 1834 618.1 1836 617.7 1836 617.4 1838 616.9 1838 616.5 1840 616.1 1840 615.7 1842 615.2 1842 614.8 1844 614.3 1844 613.9 1846 613.4 1846 612.9 1848 612.4 1848 611.9 1850 611.4 1850 610.9 1852 610.4 1852 609.8 1854 609.3 1854 608.7 1856 608.2 1856 607.6 1858 607.0 1858 606.4 1860 605.9 1860 605.3 1862 604.6 1862 604.0 1864 603.4 1864 602.8 1866 602.1 1866 601.5 1868 600.8 1868 600.1 1870 599.5 1870 598.8 1872 598.1 1872 597.4 1874 596.7 1874 596.0 1876 595.2 1876 594.5 1878 593.8 1878 593.0 1880 592.3 1880 591.5 1882 590.7 1882 589.9 1884 589.1 1884 588.4 1886 587.5 1886 586.7 1888 585.9 1888 585.1 1890 584.3 1890 583.4 1892 582.6 1892 581.7 1894 580.8 1894 580.0 1896 579.1 1896 578.2 1898 577.3 1898 576.4 1900 575.5 1900 574.6 1902 573.6 1902 572.7 1904 571.8 1904 570.8 1906 569.9 1906 568.9 1908 567.9 1908 567.0 1910 566.0 1910 565.0 1912 564.0 1912 563.0 1914 562.0 1914 561.0 1916 559.9 1916 558.9 1918 557.9 1918 556.8 1920 555.8 1920 554.7 1922 553.6 1922 552.6 1924 551.5 1924 550.4 1926 549.3 1926 548.2 1928 547.1 1928 546.0 1930 544.9 1930 543.8 1932 542.6 1932 541.5 1934 540.4 1934 539.2 1936 538.1 1936 536.9 1938 535.7 1938 534.6 1940 533.4 1940 532.2 1942 531.0 1942 529.8 1944 528.6 1944 527.4 1946 526.2 1946 525.0 1948 523.7 1948 522.5 1950 521.3 1950 520.0 1952 518.8 1952 517.5 1954 516.3 1954 515.0 1956 513.8 1956 512.5 1958 511.2 1958 509.9 1960 508.6 1960 507.4 1962 506.1 1962 504.8 1964 503.4 1964 502.1 1966 500.8 1966 499.5 1968 498.2 1968 496.8 1970 495.5 1970 494.2 1972 492.8 1972 491.5 1974 490.1 1974 488.8 1976 487.4 1976 486.1 1978 484.7 1978 483.3 1980 481.9 1980 480.6 1982 479.2 1982 477.8 1984 476.4 1984 475.0 1986 473.6 1986 472.2 1988 470.8 1988 469.4 1990 468.0 1990 466.6 1992 465.1 1992 463.7 1994 462.3 1994 460.9 1996 459.4 1996 458.0 1998 456.6 1998 455.1 2000 453.7 2000 452.2 2002 450.8 2002 449.3 2004 447.9 2004 446.4 2006 444.9 2006 443.5 2008 442.0 2008 440.6 2010 439.1 2010 437.6 2012 436.1 2012 434.7 2014 433.2 2014 431.7 2016 430.2 2016 428.7 2018 427.3 2018 425.8 2020 424.3 2020 422.8 2022 421.3 2022 419.8 2024 418.3 2024 416.8 2026 415.3 2026 413.8 2028 412.3 2028 410.8 2030 409.3 2030 407.8 2032 406.3 2032 404.8 2034 403.3 2034 401.8 2036 400.3 2036 398.8 2038 397.3 2038 395.8 2040 394.3 2040 392.7 2042 391.2 2042 389.7 2044 388.2 2044 386.7 2046 385.2 2046 383.7 2048 382.2 2048 380.7 2050 379.2 2050 377.6 2052 376.1 2052 374.6 2054 373.1 2054 371.6 2056 370.1 2056 368.6 2058 367.1 2058 365.6 2060 364.1 2060 362.6 2062 361.1 2062 359.6 2064 358.1 2064 356.6 2066 355.1 2066 353.6 2068 352.1 2068 350.6 2070 349.1 2070 347.6 2072 346.1 2072 344.6 2074 343.2 2074 341.7 2076 340.2 2076 338.7 2078 337.2 2078 335.7 2080 334.3 2080 332.8 2082 331.3 2082 329.9 2084 328.4 2084 326.9 2086 325.5 2086 324.0 2088 322.6 2088 321.1 2090 319.7 2090 318.2 2092 316.8 2092 315.3 2094 313.9 2094 312.5 2096 311.0 2096 309.6 2098 308.2 2098 306.8 2100 305.3 2100 303.9 2102 302.5 2102 301.1 2104 299.7 2104 298.3 2106 296.9 2106 295.5 2108 294.1 2108 292.7 2110 291.3 2110 290.0 2112 288.6 2112 287.2 2114 285.9 2114 284.5 2116 283.1 2116 281.8 2118 280.4 2118 279.1 2120 277.8 2120 276.4 2122 275.1 2122 273.8 2124 272.4 2124 271.1 2126 269.8 2126 268.5 2128 267.2 2128 265.9 2130 264.6 2130 263.3 2132 262.1 2132 260.8 2134 259.5 2134 258.3 2136 257.0 2136 255.8 2138 254.5 2138 253.3 2140 252.0 2140 250.8 2142 249.6 2142 248.4 2144 247.1 2144 245.9 2146 244.7 2146 243.5 2148 242.4 2148 241.2 2150 240.0 2150 238.8 2152 237.7 2152 236.5 2154 235.4 2154 234.2 2156 233.1 2156 232.0 2158 230.8 2158 229.7 2160 228.6 2160 227.5 2162 226.4 2162 225.3 2164 224.2 2164 223.2 2166 222.1 2166 221.0 2168 220.0 2168 218.9 2170 217.9 2170 216.8 2172 215.8 2172 214.8 2174 213.8 2174 212.8 2176 211.8 2176 210.8 2178 209.8 2178 208.8 2180 207.9 2180 206.9 2182 206.0 2182 205.0 2184 204.1 2184 203.2 2186 202.3 2186 201.3 2188 200.4 2188 199.5 2190 198.7 2190 197.8 2192 196.9 2192 196.0 2194 195.2 2194 194.3 2196 193.5 2196 192.7 2198 191.9 2198 191.0 2200 190.2 2200 189.4 2202 188.7 2202 187.9 2204 187.1 2204 186.3 2206 185.6 2206 184.8 2208 184.1 2208 183.4 2210 182.7 2210 182.0 2212 181.3 2212 180.6 2214 179.9 2214 179.2 2216 178.5 2216 177.9 2218 177.2 2218 176.6 2220 176.0 2220 175.4 2222 174.7 2222 174.1 2224 173.6 2224 173.0 2226 172.4 2226 171.8 2228 171.3 2228 170.7 2230 170.2 2230 169.7 2232 169.1 2232 168.6 2234 168.1 2234 167.6 2236 167.2 2236 166.7 2238 166.2 2238 165.8 2240 165.3 2240 164.9 2242 164.5 2242 164.1 2244 163.7 2244 163.3 2246 162.9 2246 162.5 2248 162.1 2248 161.8 2250 161.4 2250 161.1 2252 160.8 2252 160.5 2254 160.1 2254 159.8 2256 159.6 2256 159.3 2258 159.0 2258 158.8 2260 158.5 2260 158.3 2262 158.0 2262 157.8 2264 157.6 2264 157.4 2266 157.2 2266 157.0 2268 156.9 2268 156.7 2270 156.5 2270 156.4 2272 156.3 2272 156.2 2274 156.0 2274 155.9 2276 155.8 2276 155.8 2278 155.7 2278 155.6 2280 155.6 2280 155.5 2282 155.5 2282 155.5 2284 155.5 2284 155.5 2286 155.5 2286 155.5 2288 155.5 2288 155.5 2290 155.6 2290 155.6 2292 155.7 2292 155.8 2294 155.9 2294 156.0 2296 156.1 2296 156.2 2298 156.3 2298 156.5 2300 156.6 2300 156.7 2302 156.9 2302 157.1 2304 157.3 2304 157.5 2306 157.7 2306 157.9 2308 158.1 2308 158.3 2310 158.6 2310 158.8 2312 159.1 2312 159.4 2314 159.6 2314 159.9 2316 160.2 2316 160.5 2318 160.9 2318 161.2 2320 161.5 2320 161.9 2322 162.2 2322 162.6 2324 163.0 2324 163.3 2326 163.7 2326 164.1 2328 164.6 2328 165.0 2330 165.4 2330 165.9 2332 166.3 2332 166.8 2334 167.2 2334 167.7 2336 168.2 2336 168.7 2338 169.2 2338 169.7 2340 170.2 2340 170.8 2342 171.3 2342 171.9 2344 172.4 2344 173.0 2346 173.6 2346 174.1 2348 174.7 2348 175.3 2350 176.0 2350 176.6 2352 177.2 2352 177.9 2354 178.5 2354 179.2 2356 179.8 2356 180.5 2358 181.2 2358 181.9 2360 182.6 2360 183.3 2362 184.0 2362 184.7 2364 185.5 2364 186.2 2366 186.9 2366 187.7 2368 188.5 2368 189.2 2370 190.0 2370 190.8 2372 191.6 2372 192.4 2374 193.2 2374 194.1 2376 194.9 2376 195.7 2378 196.6 2378 197.4 2380 198.3 2380 199.2 2382 200.0 2382 200.9 2384 201.8 2384 202.7 2386 203.6 2386 204.5 2388 205.5 2388 206.4 2390 207.3 2390 208.3 2392 209.2 2392 210.2 2394 211.1 2394 212.1 2396 213.1 2396 214.1 2398 215.1 2398 216.1 2400 217.1 2400 218.1 2402 219.1 2402 220.2 2404 221.2 2404 222.2 2406 223.3 2406 224.3 2408 225.4 2408 226.5 2410 227.6 2410 228.6 2412 229.7 2412 230.8 2414 231.9 2414 233.0 2416 234.1 2416 235.3 2418 236.4 2418 237.5 2420 238.7 2420 239.8 2422 241.0 2422 242.1 2424 243.3 2424 244.4 2426 245.6 2426 246.8 2428 248.0 2428 249.2 2430 250.4 2430 251.6 2432 252.8 2432 254.0 2434 255.2 2434 256.4 2436 257.6 2436 258.9 2438 260.1 2438 261.3 2440 262.6 2440 263.8 2442 265.1 2442 266.4 2444 267.6 2444 268.9 2446 270.2 2446 271.5 2448 272.7 2448 274.0 2450 275.3 2450 276.6 2452 277.9 2452 279.2 2454 280.5 2454 281.9 2456 283.2 2456 284.5 2458 285.8 2458 287.2 2460 288.5 2460 289.8 2462 291.2 2462 292.5 2464 293.9 2464 295.2 2466 296.6 2466 297.9 2468 299.3 2468 300.7 2470 302.0 2470 303.4 2472 304.8 2472 306.2 2474 307.5 2474 308.9 2476 310.3 2476 311.7 2478 313.1 2478 314.5 2480 315.9 2480 317.3 2482 318.7 2482 320.1 2484 321.5 2484 323.0 2486 324.4 2486 325.8 2488 327.2 2488 328.6 2490 330.1 2490 331.5 2492 332.9 2492 334.3 2494 335.8 2494 337.2 2496 338.6 2496 340.1 2498 341.5 2498 343.0 2500 344.4 2500 345.9 2502 347.3 2502 348.7 2504 350.2 2504 351.6 2506 353.1 2506 354.6 2508 356.0 2508 357.5 2510 358.9 2510 360.4 2512 361.8 2512 363.3 2514 364.8 2514 366.2 2516 367.7 2516 369.1 2518 370.6 2518 372.1 2520 373.5 2520 375.0 2522 376.5 2522 377.9 2524 379.4 2524 380.9 2526 382.3 2526 383.8 2528 385.3 2528 386.7 2530 388.2 2530 389.6 2532 391.1 2532 392.6 2534 394.0 2534 395.5 2536 397.0" stroke="#ff0000" stroke-width="1" fill="none"/>
<polyline points="46 452.3 48 450.7 48 449.1 50 447.5 50 445.9 52 444.3 52 442.7 54 441.1 54 439.5 56 437.9 56 436.4 58 434.8 58 433.2 60 431.6 60 430.0 62 428.4 62 426.8 64 425.2 64 423.6 66 422.0 66 420.4 68 418.9 68 417.3 70 415.7 70 414.1 72 412.5 72 411.0 74 409.4 74 407.8 76 406.2 76 404.7 78 403.1 78 401.5 80 400.0 80 398.4 82 396.8 82 395.3 84 393.7 84 392.2 86 390.6 86 389.1 88 387.5 88 386.0 90 384.5 90 382.9 92 381.4 92 379.8 94 378.3 94 376.8 96 375.3 96 373.7 98 372.2 98 370.7 100 369.2 100 367.7 102 366.2 102 364.7 104 363.2 104 361.7 106 360.2 106 358.7 108 357.2 108 355.8 110 354.3 110 352.8 112 351.3 112 349.9 114 348.4 114 347.0 116 345.5 116 344.1 118 342.6 118 341.2 120 339.8 120 338.3 122 336.9 122 335.5 124 334.1 124 332.7 126 331.3 126 329.9 128 328.5 128 327.1 130 325.7 130 324.3 132 322.9 132 321.6 134 320.2 134 318.8 136 317.5 136 316.1 138 314.8 138 313.4 140 312.1 140 310.8 142 309.5 142 308.1 144 306.8 144 305.5 146 304.2 146 302.9 148 301.6 148 300.4 150 299.1 150 297.8 152 296.6 152 295.3 154 294.1 154 292.8 156 291.6 156 290.3 158 289.1 158 287.9 160 286.7 160 285.5 162 284.3 162 283.1 164 281.9 164 280.7 166 279.6 166 278.4 168 277.2 168 276.1 170 274.9 170 273.8 172 272.7 172 271.5 174 270.4 174 269.3 176 268.2 176 267.1 178 266.0 178 265.0 180 263.9 180 262.8 182 261.8 182 260.7 184 259.7 184 258.7 186 257.6 186 256.6 188 255.6 188 254.6 190 253.6 190 252.6 192 251.6 192 250.7 194 249.7 194 248.8 196 247.8 196 246.9 198 245.9 198 245.0 200 244.1 200 243.2 202 242.3 202 241.4 204 240.5 204 239.7 206 238.8 206 237.9 208 237.1 208 236.3 210 235.4 210 234.6 212 233.8 212 233.0 214 232.2 214 231.4 216 230.6 216 229.9 218 229.1 218 228.4 220 227.6 220 226.9 222 226.2 222 225.5 224 224.8 224 224.1 226 223.4 226 222.7 228 222.0 228 221.4 230 220.7 230 220.1 232 219.4 232 218.8 234 218.2 234 217.6 236 217.0 236 216.4 238 215.9 238 215.3 240 214.7 240 214.2 242 213.6 242 213.1 244 212.6 244 212.1 246 211.6 246 211.1 248 210.6 248 210.1 250 209.7 250 209.2 252 208.8 252 208.4 254 207.9 254 207.5 256 207.1 256 206.7 258 206.3 258 206.0 260 205.6 260 205.3 262 204.9 262 204.6 264 204.2 264 203.9 266 203.6 266 203.3 268 203.1 268 202.8 270 202.5 270 202.3 272 202.0 272 201.8 274 201.6 274 201.3 276 201.1 276 200.9 278 200.8 278 200.6 280 200.4 280 200.3 282 200.1 282 200.0 284 199.9 284 199.7 286 199.6 286 199.5 288 199.5 288 199.4 290 199.3 290 199.3 292 199.2 292 199.2 294 199.2 294 199.1 296 199.1 296 199.1 298 199.2 298 199.2 300 199.2 300 199.3 302 199.3 302 199.4 304 199.5 304 199.6 306 199.7 306 199.8 308 199.9 308 200.0 310 200.1 310 200.3 312 200.4 312 200.6 314 200.8 314 201.0 316 201.2 316 201.4 318 201.6 318 201.8 320 202.1 320 202.3 322 202.6 322 202.8 324 203.1 324 203.4 326 203.7 326 204.0 328 204.3 328 204.6 330 205.0 330 205.3 332 205.7 332 206.0 334 206.4 334 206.8 336 207.2 336 207.6 338 208.0 338 208.4 340 208.9 340 209.3 342 209.8 342 210.2 344 210.7 344 211.2 346 211.7 346 212.2 348 212.7 348 213.2 350 213.8 350 214.3 352 214.8 352 215.4 354 216.0 354 216.5 356 217.1 356 217.7 358 218.3 358 218.9 360 219.6 360 220.2 362 220.8 362 221.5 364 222.2 364 222.8 366 223.5 366 224.2 368 224.9 368 225.6 370 226.3 370 227.0 372 227.8 372 228.5 374 229.3 374 230.0 376 230.8 376 231.6 378 232.4 378 233.2 380 234.0 380 234.8 382 235.6 382 236.4 384 237.3 384 238.1 386 239.0 386 239.8 388 240.7 388 241.6 390 242.5 390 243.4 392 244.3 392 245.2 394 246.1 394 247.1 396 248.0 396 248.9 398 249.9 398 250.9 400 251.8 400 252.8 402 253.8 402 254.8 404 255.8 404 256.8 406 257.8 406 258.9 408 259.9 408 260.9 410 262.0 410 263.0 412 264.1 412 265.2 414 266.3 414 267.4 416 268.4 416 269.5 418 270.7 418 271.8 420 272.9 420 274.0 422 275.2 422 276.3 424 277.5 424 278.6 426 279.8 426 281.0 428 282.1 428 283.3 430 284.5 430 285.7 432 286.9 432 288.1 434 289.4 434 290.6 436 291.8 436 293.1 438 294.3 438 295.6 440 296.8 440 298.1 442 299.3 442 300.6 444 301.9 444 303.2 446 304.5 446 305.8 448 307.1 448 308.4 450 309.7 450 311.0 452 312.4 452 313.7 454 315.0 454 316.4 456 317.7 456 319.1 458 320.5 458 321.8 460 323.2 460 324.6 462 326.0 462 327.3 464 328.7 464 330.1 466 331.5 466 332.9 468 334.4 468 335.8 470 337.2 470 338.6 472 340.0 472 341.5 474 342.9 474 344.4 476 345.8 476 347.3 478 348.7 478 350.2 480 351.6 480 353.1 482 354.6 482 356.1 484 357.5 484 359.0 486 360.5 486 362.0 488 363.5 488 365.0 490 366.5 490 368.0 492 369.5 492 371.0 494 372.5 494 374.1 496 375.6 496 377.1 498 378.6 498 380.2 500 381.7 500 383.2 502 384.8 502 386.3 504 387.8 504 389.4 506 390.9 506 392.5 508 394.0 508 395.6 510 397.2 510 398.7 512 400.3 512 401.8 514 403.4 514 405.0 516 406.6 516 408.1 518 409.7 518 411.3 520 412.9 520 414.4 522 416.0 522 417.6 524 419.2 524 420.8 526 422.3 526 423.9 528 425.5 528 427.1 530 428.7 530 430.3 532 431.9 532 433.5 534 435.1 534 436.7 536 438.3 536 439.9 538 441.5 538 443.1 540 444.6 540 446.2 542 447.8 542 449.4 544 451.0 544 452.6 546 454.2 546 455.8 548 457.4 548 459.0 550 460.6 550 462.2 552 463.8 552 465.4 554 467.0 554 468.6 556 470.2 556 471.8 558 473.4 558 475.0 560 476.6 560 478.2 562 479.7 562 481.3 564 482.9 564 484.5 566 486.1 566 487.7 568 489.3 568 490.8 570 492.4 570 494.0 572 495.6 572 497.1 574 498.7 574 500.3 576 501.8 576 503.4 578 505.0 578 506.5 580 508.1 580 509.7 582 511.2 582 512.8 584 514.3 584 515.9 586 517.4 586 519.0 588 520.5 588 522.0 590 523.6 590 525.1 592 526.6 592 528.2 594 529.7 594 531.2 596 532.7 596 534.2 598 535.7 598 537.2 600 538.7 600 540.2 602 541.7 602 543.2 604 544.7 604 546.2 606 547.7 606 549.2 608 550.6 608 552.1 610 553.6 610 555.0 612 556.5 612 558.0 614 559.4 614 560.9 616 562.3 616 563.7 618 565.2 618 566.6 620 568.0 620 569.4 622 570.8 622 572.3 624 573.7 624 575.1 626 576.5 626 577.8 628 579.2 628 580.6 630 582.0 630 583.4 632 584.7 632 586.1 634 587.4 634 588.8 636 590.1 636 591.5 638 592.8 638 594.1 640 595.4 640 596.8 642 598.1 642 599.4 644 600.7 644 602.0 646 603.2 646 604.5 648 605.8 648 607.1 650 608.3 650 609.6 652 610.8 652 612.1 654 613.3 654 614.5 656 615.8 656 617.0 658 618.2 658 619.4 660 620.6 660 621.8 662 623.0 662 624.1 664 625.3 664 626.5 666 627.6 666 628.8 668 629.9 668 631.1 670 632.2 670 633.3 672 634.4 672 635.5 674 636.6 674 637.7 676 638.8 676 639.9 678 641.0 678 642.0 680 643.1 680 644.1 682 645.2 682 646.2 684 647.2 684 648.2 686 649.2 686 650.2 688 651.2 688 652.2 690 653.2 690 654.2 692 655.1 692 656.1 694 657.0 694 658.0 696 658.9 696 659.8 698 660.7 698 661.6 700 662.5 700 663.4 702 664.3 702 665.1 704 666.0 704 666.9 706 667.7 706 668.5 708 669.4 708 670.2 710 671.0 710 671.8 712 672.6 712 673.4 714 674.1 714 674.9 716 675.7 716 676.4 718 677.2 718 677.9 720 678.6 720 679.3 722 680.0 722 680.7 724 681.4 724 682.1 726 682.7 726 683.4 728 684.0 728 684.7 730 685.3 730 685.9 732 686.5 732 687.1 734 687.7 734 688.3 736 688.9 736 689.5 738 690.0 738 690.6 740 691.1 740 691.6 742 692.1 742 692.7 744 693.1 744 693.6 746 694.1 746 694.6 748 695.0 748 695.5 750 695.9 750 696.4 752 696.8 752 697.2 754 697.6 754 698.0 756 698.4 756 698.7 758 699.1 758 699.5 760 699.8 760 700.1 762 700.5 762 700.8 764 701.1 764 701.4 766 701.6 766 701.9 768 702.2 768 702.4 770 702.7 770 702.9 772 703.1 772 703.3 774 703.5 774 703.7 776 703.9 776 704.1 778 704.3 778 704.4 780 704.6 780 704.7 782 704.8 782 704.9 784 705.0 784 705.1 786 705.2 786 705.3 788 705.3 788 705.4 790 705.4 790 705.5 792 705.5 792 705.5 794 705.5 794 705.5 796 705.5 796 705.4 798 705.4 798 705.4 800 705.3 800 705.2 802 705.2 802 705.1 804 705.0 804 704.9 806 704.7 806 704.6 808 704.5 808 704.3 810 704.2 810 704.0 812 703.8 812 703.6 814 703.4 814 703.2 816 703.0 816 702.8 818 702.5 818 702.3 820 702.0 820 701.8 822 701.5 822 701.2 824 700.9 824 700.6 826 700.3 826 699.9 828 699.6 828 699.2 830 698.9 830 698.5 832 698.1 832 697.8 834 697.4 834 696.9 836 696.5 836 696.1 838 695.7 838 695.2 840 694.8 840 694.3 842 693.8 842 693.3 844 692.9 844 692.3 846 691.8 846 691.3 848 690.8 848 690.2 850 689.7 850 689.1 852 688.6 852 688.0 854 687.4 854 686.8 856 686.2 856 685.6 858 684.9 858 684.3 860 683.7 860 683.0 862 682.3 862 681.7 864 681.0 864 680.3 866 679.6 866 678.9 868 678.2 868 677.4 870 676.7 870 676.0 872 675.2 872 674.5 874 673.7 874 672.9 876 672.1 876 671.3 878 670.5 878 669.7 880 668.9 880 668.0 882 667.2 882 666.3 884 665.5 884 664.6 886 663.7 886 662.9 888 662.0 888 661.1 890 660.2 890 659.2 892 658.3 892 657.4 894 656.4 894 655.5 896 654.5 896 653.6 898 652.6 898 651.6 900 650.6 900 649.6 902 648.6 902 647.6 904 646.6 904 645.6 906 644.5 906 643.5 908 642.4 908 641.4 910 640.3 910 639.2 912 638.2 912 637.1 914 636.0 914 634.9 916 633.8 916 632.6 918 631.5 918 630.4 920 629.2 920 628.1 922 626.9 922 625.8 924 624.6 924 623.4 926 622.3 926 621.1 928 619.9 928 618.7 930 617.5 930 616.3 932 615.0 932 613.8 934 612.6 934 611.3 936 610.1 936 608.8 938 607.6 938 606.3 940 605.0 940 603.8 942 602.5 942 601.2 944 599.9 944 598.6 946 597.3 946 596.0 948 594.7 948 593.3 950 592.0 950 590.7 952 589.3 952 588.0 954 586.6 954 585.3 956 583.9 956 582.5 958 581.2 958 579.8 960 578.4 960 577.0 962 575.6 962 574.2 964 572.8 964 571.4 966 570.0 966 568.6 968 567.2 968 565.7 970 564.3 970 562.9 972 561.4 972 560.0 974 558.5 974 557.1 976 555.6 976 554.2 978 552.7 978 551.2 980 549.8 980 548.3 982 546.8 982 545.3 984 543.8 984 542.3 986 540.8 986 539.3 988 537.8 988 536.3 990 534.8 990 533.3 992 531.8 992 530.3 994 528.8 994 527.2 996 525.7 996 524.2 998 522.6 998 521.1 1000 519.6 1000 518.0 1002 516.5 1002 514.9 1004 513.4 1004 511.8 1006 510.3 1006 508.7 1008 507.2 1008 505.6 1010 504.0 1010 502.5 1012 500.9 1012 499.3 1014 497.8 1014 496.2 1016 494.6 1016 493.0 1018 491.5 1018 489.9 1020 488.3 1020 486.7 1022 485.1 1022 483.6 1024 482.0 1024 480.4 1026 478.8 1026 477.2 1028 475.6 1028 474.0 1030 472.4 1030 470.8 1032 469.2 1032 467.6 1034 466.1 1034 464.5 1036 462.9 1036 461.3 1038 459.7 1038 458.1 1040 456.5 1040 454.9 1042 453.3 1042 451.7 1044 450.1 1044 448.5 1046 446.9 1046 445.3 1048 443.7 1048 442.1 1050 440.5 1050 438.9 1052 437.3 1052 435.7 1054 434.1 1054 432.5 1056 430.9 1056 429.3 1058 427.8 1058 426.2 1060 424.6 1060 423.0 1062 421.4 1062 419.8 1064 418.2 1064 416.6 1066 415.1 1066 413.5 1068 411.9 1068 410.3 1070 408.8 1070 407.2 1072 405.6 1072 404.0 1074 402.5 1074 400.9 1076 399.3 1076 397.8 1078 396.2 1078 394.7 1080 393.1 1080 391.6 1082 390.0 1082 388.5 1084 386.9 1084 385.4 1086 383.8 1086 382.3 1088 380.8 1088 379.2 1090 377.7 1090 376.2 1092 374.7 1092 373.1 1094 371.6 1094 370.1 1096 368.6 1096 367.1 1098 365.6 1098 364.1 1100 362.6 1100 361.1 1102 359.6 1102 358.1 1104 356.6 1104 355.2 1106 353.7 1106 352.2 1108 350.8 1108 349.3 1110 347.8 1110 346.4 1112 344.9 1112 343.5 1114 342.1 1114 340.6 1116 339.2 1116 337.8 1118 336.3 1118 334.9 1120 333.5 1120 332.1 1122 330.7 1122 329.3 1124 327.9 1124 326.5 1126 325.1 1126 323.7 1128 322.4 1128 321.0 1130 319.6 1130 318.3 1132 316.9 1132 315.6 1134 314.2 1134 312.9 1136 311.6 1136 310.2 1138 308.9 1138 307.6 1140 306.3 1140 305.0 1142 303.7 1142 302.4 1144 301.1 1144 299.9 1146 298.6 1146 297.3 1148 296.1 1148 294.8 1150 293.6 1150 292.3 1152 291.1 1152 289.8 1154 288.6 1154 287.4 1156 286.2 1156 285.0 1158 283.8 1158 282.6 1160 281.4 1160 280.3 1162 279.1 1162 277.9 1164 276.8 1164 275.6 1166 274.5 1166 273.3 1168 272.2 1168 271.1 1170 270.0 1170 268.9 1172 267.8 1172 266.7 1174 265.6 1174 264.5 1176 263.5 1176 262.4 1178 261.4 1178 260.3 1180 259.3 1180 258.2 1182 257.2 1182 256.2 1184 255.2 1184 254.2 1186 253.2 1186 252.2 1188 251.3 1188 250.3 1190 249.3 1190 248.4 1192 247.4 1192 246.5 1194 245.6 1194 244.7 1196 243.7 1196 242.8 1198 241.9 1198 241.1 1200 240.2 1200 239.3 1202 238.5 1202 237.6 1204 236.8 1204 235.9 1206 235.1 1206 234.3 1208 233.5 1208 232.7 1210 231.9 1210 231.1 1212 230.3 1212 229.6 1214 228.8 1214 228.1 1216 227.3 1216 226.6 1218 225.9 1218 225.2 1220 224.5 1220 223.8 1222 223.1 1222 222.4 1224 221.8 1224 221.1 1226 220.5 1226 219.8 1228 219.2 1228 218.6 1230 218.0 1230 217.4 1232 216.8 1232 216.2 1234 215.6 1234 215.1 1236 214.5 1236 214.0 1238 213.4 1238 212.9 1240 212.4 1240 211.9 1242 211.4 1242 210.9 1244 210.4 1244 210.0 1246 209.5 1246 209.1 1248 208.6 1248 208.2 1250 207.8 1250 207.4 1252 207.0 1252 206.6 1254 206.2 1254 205.8 1256 205.5 1256 205.1 1258 204.8 1258 204.4 1260 204.1 1260 203.8 1262 203.5 1262 203.2 1264 202.9 1264 202.7 1266 202.4 1266 202.2 1268 201.9 1268 201.7 1270 201.5 1270 201.3 1272 201.1 1272 200.9 1274 200.7 1274 200.5 1276 200.3 1276 200.2 1278 200.1 1278 199.9 1280 199.8 1280 199.7 1282 199.6 1282 199.5 1284 199.4 1284 199.3 1286 199.3 1286 199.2 1288 199.2 1288 199.2 1290 199.1 1290 199.1 1292 199.1 1292 199.1 1294 199.2 1294 199.2 1296 199.2 1296 199.3 1298 199.3 1298 199.4 1300 199.5 1300 199.6 1302 199.7 1302 199.8 1304 199.9 1304 200.1 1306 200.2 1306 200.3 1308 200.5 1308 200.7 1310 200.9 1310 201.1 1312 201.3 1312 201.5 1314 201.7 1314 201.9 1316 202.2 1316 202.4 1318 202.7 1318 202.9 1320 203.2 1320 203.5 1322 203.8 1322 204.1 1324 204.4 1324 204.8 1326 205.1 1326 205.5 1328 205.8 1328 206.2 1330 206.6 1330 207.0 1332 207.4 1332 207.8 1334 208.2 1334 208.6 1336 209.1 1336 209.5 1338 210.0 1338 210.4 1340 210.9 1340 211.4 1342 211.9 1342 212.4 1344 212.9 1344 213.4 1346 214.0 1346 214.5 1348 215.1 1348 215.6 1350 216.2 1350 216.8 1352 217.4 1352 218.0 1354 218.6 1354 219.2 1356 219.8 1356 220.5 1358 221.1 1358 221.8 1360 222.4 1360 223.1 1362 223.8 1362 224.5 1364 225.2 1364 225.9 1366 226.6 1366 227.3 1368 228.1 1368 228.8 1370 229.6 1370 230.3 1372 231.1 1372 231.9 1374 232.7 1374 233.5 1376 234.3 1376 235.1 1378 235.9 1378 236.8 1380 237.6 1380 238.5 1382 239.3 1382 240.2 1384 241.1 1384 241.9 1386 242.8 1386 243.7 1388 244.7 1388 245.6 1390 246.5 1390 247.4 1392 248.4 1392 249.3 1394 250.3 1394 251.3 1396 252.2 1396 253.2 1398 254.2 1398 255.2 1400 256.2 1400 257.2 1402 258.2 1402 259.3 1404 260.3 1404 261.4 1406 262.4 1406 263.5 1408 264.5 1408 265.6 1410 266.7 1410 267.8 1412 268.9 1412 270.0 1414 271.1 1414 272.2 1416 273.3 1416 274.5 1418 275.6 1418 276.8 1420 277.9 1420 279.1 1422 280.3 1422 281.4 1424 282.6 1424 283.8 1426 285.0 1426 286.2 1428 287.4 1428 288.6 1430 289.8 1430 291.1 1432 292.3 1432 293.6 1434 294.8 1434 296.1 1436 297.3 1436 298.6 1438 299.9 1438 301.1 1440 302.4 1440 303.7 1442 305.0 1442 306.3 1444 307.6 1444 308.9 1446 310.2 1446 311.6 1448 312.9 1448 314.2 1450 315.6 1450 316.9 1452 318.3 1452 319.6 1454 321.0 1454 322.4 1456 323.7 1456 325.1 1458 326.5 1458 327.9 1460 329.3 1460 330.7 1462 332.1 1462 333.5 1464 334.9 1464 336.3 1466 337.8 1466 339.2 1468 340.6 1468 342.1 1470 343.5 1470 344.9 1472 346.4 1472 347.8 1474 349.3 1474 350.8 1476 352.2 1476 353.7 1478 355.2 1478 356.6 1480 358.1 1480 359.6 1482 361.1 1482 362.6 1484 364.1 1484 365.6 1486 367.1 1486 368.6 1488 370.1 1488 371.6 1490 373.1 1490 374.7 1492 376.2 1492 377.7 1494 379.2 1494 380.8 1496 382.3 1496 383.8 1498 385.4 1498 386.9 1500 388.5 1500 390.0 1502 391.6 1502 393.1 1504 394.7 1504 396.2 1506 397.8 1506 399.3 1508 400.9 1508 402.5 1510 404.0 1510 405.6 1512 407.2 1512 408.8 1514 410.3 1514 411.9 1516 413.5 1516 415.1 1518 416.6 1518 418.2 1520 419.8 1520 421.4 1522 423.0 1522 424.6 1524 426.2 1524 427.8 1526 429.3 1526 430.9 1528 432.5 1528 434.1 1530 435.7 1530 437.3 1532 438.9 1532 440.5 1534 442.1 1534 443.7 1536 445.3 1536 446.9 1538 448.5 1538 450.1 1540 451.7 1540 453.3 1542 454.9 1542 456.5 1544 458.1 1544 459.7 1546 461.3 1546 462.9 1548 464.5 1548 466.1 1550 467.6 1550 469.2 1552 470.8 1552 472.4 1554 474.0 1554 475.6 1556 477.2 1556 478.8 1558 480.4 1558 482.0 1560 483.6 1560 485.1 1562 486.7 1562 488.3 1564 489.9 1564 491.5 1566 493.0 1566 494.6 1568 496.2 1568 497.8 1570 499.3 1570 500.9 1572 502.5 1572 504.0 1574 505.6 1574 507.2 1576 508.7 1576 510.3 1578 511.8 1578 513.4 1580 514.9 1580 516.5 1582 518.0 1582 519.6 1584 521.1 1584 522.6 1586 524.2 1586 525.7 1588 527.2 1588 528.8 1590 530.3 1590 531.8 1592 533.3 1592 534.8 1594 536.3 1594 537.8 1596 539.3 1596 540.8 1598 542.3 1598 543.8 1600 545.3 1600 546.8 1602 548.3 1602 549.8 1604 551.2 1604 552.7 1606 554.2 1606 555.6 1608 557.1 1608 558.5 1610 560.0 1610 561.4 1612 562.9 1612 564.3 1614 565.7 1614 567.2 1616 568.6 1616 570.0 1618 571.4 1618 572.8 1620 574.2 1620 575.6 1622 577.0 1622 578.4 1624 579.8 1624 581.2 1626 582.5 1626 583.9 1628 585.3 1628 586.6 1630 588.0 1630 589.3 1632 590.7 1632 592.0 1634 593.3 1634 594.7 1636 596.0 1636 597.3 1638 598.6 1638 599.9 1640 601.2 1640 602.5 1642 603.8 1642 605.0 1644 606.3 1644 607.6 1646 608.8 1646 610.1 1648 611.3 1648 612.6 1650 613.8 1650 615.0 1652 616.3 1652 617.5 1654 618.7 1654 619.9 1656 621.1 1656 622.3 1658 623.4 1658 624.6 1660 625.8 1660 626.9 1662 628.1 1662 629.2 1664 630.4 1664 631.5 1666 632.6 1666 633.8 1668 634.9 1668 636.0 1670 637.1 1670 638.2 1672 639.2 1672 640.3 1674 641.4 1674 642.4 1676 643.5 1676 644.5 1678 645.6 1678 646.6 1680 647.6 1680 648.6 1682 649.6 1682 650.6 1684 651.6 1684 652.6 1686 653.6 1686 654.5 1688 655.5 1688 656.4 1690 657.4 1690 658.3 1692 659.2 1692 660.2 1694 661.1 1694 662.0 1696 662.9 1696 663.7 1698 664.6 1698 665.5 1700 666.3 1700 667.2 1702 668.0 1702 668.9 1704 669.7 1704 670.5 1706 671.3 1706 672.1 1708 672.9 1708 673.7 1710 674.5 1710 675.2 1712 676.0 1712 676.7 1714 677.4 1714 678.2 1716 678.9 1716 679.6 1718 680.3 1718 681.0 1720 681.7 1720 682.3 1722 683.0 1722 683.7 1724 684.3 1724 684.9 1726 685.6 1726 686.2 1728 686.8 1728 687.4 1730 688.0 1730 688.6 1732 689.1 1732 689.7 1734 690.2 1734 690.8 1736 691.3 1736 691.8 1738 692.3 1738 692.9 1740 693.3 1740 693.8 1742 694.3 1742 694.8 1744 695.2 1744 695.7 1746 696.1 1746 696.5 1748 696.9 1748 697.4 1750 697.8 1750 698.1 1752 698.5 1752 698.9 1754 699.2 1754 699.6 1756 699.9 1756 700.3 1758 700.6 1758 700.9 1760 701.2 1760 701.5 1762 701.8 1762 702.0 1764 702.3 1764 702.5 1766 702.8 1766 703.0 1768 703.2 1768 703.4 1770 703.6 1770 703.8 1772 704.0 1772 704.2 1774 704.3 1774 704.5 1776 704.6 1776 704.7 1778 704.9 1778 705.0 1780 705.1 1780 705.2 1782 705.2 1782 705.3 1784 705.4 1784 705.4 1786 705.4 1786 705.5 1788 705.5 1788 705.5 1790 705.5 1790 705.5 1792 705.5 1792 705.4 1794 705.4 1794 705.3 1796 705.3 1796 705.2 1798 705.1 1798 705.0 1800 704.9 1800 704.8 1802 704.7 1802 704.6 1804 704.4 1804 704.3 1806 704.1 1806 703.9 1808 703.7 1808 703.5 1810 703.3 1810 703.1 1812 702.9 1812 702.7 1814 702.4 1814 702.2 1816 701.9 1816 701.6 1818 701.4 1818 701.1 1820 700.8 1820 700.5 1822 700.1 1822 699.8 1824 699.5 1824 699.1 1826 698.7 1826 698.4 1828 698.0 1828 697.6 1830 697.2 1830 696.8 1832 696.4 1832 695.9 1834 695.5 1834 695.0 1836 694.6 1836 694.1 1838 693.6 1838 693.1 1840 692.7 1840 692.1 1842 691.6 1842 691.1 1844 690.6 1844 690.0 1846 689.5 1846 688.9 1848 688.3 1848 687.7 1850 687.1 1850 686.5 1852 685.9 1852 685.3 1854 684.7 1854 684.0 1856 683.4 1856 682.7 1858 682.1 1858 681.4 1860 680.7 1860 680.0 1862 679.3 1862 678.6 1864 677.9 1864 677.2 1866 676.4 1866 675.7 1868 674.9 1868 674.1 1870 673.4 1870 672.6 1872 671.8 1872 671.0 1874 670.2 1874 669.4 1876 668.5 1876 667.7 1878 666.9 1878 666.0 1880 665.1 1880 664.3 1882 663.4 1882 662.5 1884 661.6 1884 660.7 1886 659.8 1886 658.9 1888 658.0 1888 657.0 1890 656.1 1890 655.1 1892 654.2 1892 653.2 1894 652.2 1894 651.2 1896 650.2 1896 649.2 1898 648.2 1898 647.2 1900 646.2 1900 645.2 1902 644.1 1902 643.1 1904 642.0 1904 641.0 1906 639.9 1906 638.8 1908 637.7 1908 636.6 1910 635.5 1910 634.4 1912 633.3 1912 632.2 1914 631.1 1914 629.9 1916 628.8 1916 627.6 1918 626.5 1918 625.3 1920 624.1 1920 623.0 1922 621.8 1922 620.6 1924 619.4 1924 618.2 1926 617.0 1926 615.8 1928 614.5 1928 613.3 1930 612.1 1930 610.8 1932 609.6 1932 608.3 1934 607.1 1934 605.8 1936 604.5 1936 603.2 1938 602.0 1938 600.7 1940 599.4 1940 598.1 1942 596.8 1942 595.4 1944 594.1 1944 592.8 1946 591.5 1946 590.1 1948 588.8 1948 587.4 1950 586.1 1950 584.7 1952 583.4 1952 582.0 1954 580.6 1954 579.2 1956 577.8 1956 576.5 1958 575.1 1958 573.7 1960 572.3 1960 570.8 1962 569.4 1962 568.0 1964 566.6 1964 565.2 1966 563.7 1966 562.3 1968 560.9 1968 559.4 1970 558.0 1970 556.5 1972 555.0 1972 553.6 1974 552.1 1974 550.6 1976 549.2 1976 547.7 1978 546.2 1978 544.7 1980 543.2 1980 541.7 1982 540.2 1982 538.7 1984 537.2 1984 535.7 1986 534.2 1986 532.7 1988 531.2 1988 529.7 1990 528.2 1990 526.6 1992 525.1 1992 523.6 1994 522.0 1994 520.5 1996 519.0 1996 517.4 1998 515.9 1998 514.3 2000 512.8 2000 511.2 2002 509.7 2002 508.1 2004 506.5 2004 505.0 2006 503.4 2006 501.8 2008 500.3 2008 498.7 2010 497.1 2010 495.6 2012 494.0 2012 492.4 2014 490.8 2014 489.3 2016 487.7 2016 486.1 2018 484.5 2018 482.9 2020 481.3 2020 479.7 2022 478.2 2022 476.6 2024 475.0 2024 473.4 2026 471.8 2026 470.2 2028 468.6 2028 467.0 2030 465.4 2030 463.8 2032 462.2 2032 460.6 2034 459.0 2034 457.4 2036 455.8 2036 454.2 2038 452.6 2038 451.0 2040 449.4 2040 447.8 2042 446.2 2042 444.6 2044 443.1 2044 441.5 2046 439.9 2046 438.3 2048 436.7 2048 435.1 2050 433.5 2050 431.9 2052 430.3 2052 428.7 2054 427.1 2054 425.5 2056 423.9 2056 422.3 2058 420.8 2058 419.2 2060 417.6 2060 416.0 2062 414.4 2062 412.9 2064 411.3 2064 409.7 2066 408.1 2066 406.6 2068 405.0 2068 403.4 2070 401.8 2070 400.3 2072 398.7 2072 397.2 2074 395.6 2074 394.0 2076 392.5 2076 390.9 2078 389.4 2078 387.8 2080 386.3 2080 384.8 2082 383.2 2082 381.7 2084 380.2 2084 378.6 2086 377.1 2086 375.6 2088 374.1 2088 372.5 2090 371.0 2090 369.5 2092 368.0 2092 366.5 2094 365.0 2094 363.5 2096 362.0 2096 360.5 2098 359.0 2098 357.5 2100 356.1 2100 354.6 2102 353.1 2102 351.6 2104 350.2 2104 348.7 2106 347.3 2106 345.8 2108 344.4 2108 342.9 2110 341.5 2110 340.0 2112 338.6 2112 337.2 2114 335.8 2114 334.4 2116 332.9 2116 331.5 2118 330.1 2118 328.7 2120 327.3 2120 326.0 2122 324.6 2122 323.2 2124 321.8 2124 320.5 2126 319.1 2126 317.7 2128 316.4 2128 315.0 2130 313.7 2130 312.4 2132 311.0 2132 309.7 2134 308.4 2134 307.1 2136 305.8 2136 304.5 2138 303.2 2138 301.9 2140 300.6 2140 299.3 2142 298.1 2142 296.8 2144 295.6 2144 294.3 2146 293.1 2146 291.8 2148 290.6 2148 289.4 2150 288.1 2150 286.9 2152 285.7 2152 284.5 2154 283.3 2154 282.1 2156 281.0 2156 279.8 2158 278.6 2158 277.5 2160 276.3 2160 275.2 2162 274.0 2162 272.9 2164 271.8 2164 270.7 2166 269.5 2166 268.4 2168 267.4 2168 266.3 2170 265.2 2170 264.1 2172 263.0 2172 262.0 2174 260.9 2174 259.9 2176 258.9 2176 257.8 2178 256.8 2178 255.8 2180 254.8 2180 253.8 2182 252.8 2182 251.8 2184 250.9 2184 249.9 2186 248.9 2186 248.0 2188 247.1 2188 246.1 2190 245.2 2190 244.3 2192 243.4 2192 242.5 2194 241.6 2194 240.7 2196 239.8 2196 239.0 2198 238.1 2198 237.3 2200 236.4 2200 235.6 2202 234.8 2202 234.0 2204 233.2 2204 232.4 2206 231.6 2206 230.8 2208 230.0 2208 229.3 2210 228.5 2210 227.8 2212 227.0 2212 226.3 2214 225.6 2214 224.9 2216 224.2 2216 223.5 2218 222.8 2218 222.2 2220 221.5 2220 220.8 2222 220.2 2222 219.6 2224 218.9 2224 218.3 2226 217.7 2226 217.1 2228 216.5 2228 216.0 2230 215.4 2230 214.8 2232 214.3 2232 213.8 2234 213.2 2234 212.7 2236 212.2 2236 211.7 2238 211.2 2238 210.7 2240 210.2 2240 209.8 2242 209.3 2242 208.9 2244 208.4 2244 208.0 2246 207.6 2246 207.2 2248 206.8 2248 206.4 2250 206.0 2250 205.7 2252 205.3 2252 205.0 2254 204.6 2254 204.3 2256 204.0 2256 203.7 2258 203.4 2258 203.1 2260 202.8 2260 202.6 2262 202.3 2262 202.1 2264 201.8 2264 201.6 2266 201.4 2266 201.2 2268 201.0 2268 200.8 2270 200.6 2270 200.4 2272 200.3 2272 200.1 2274 200.0 2274 199.9 2276 199.8 2276 199.7 2278 199.6 2278 199.5 2280 199.4 2280 199.3 2282 199.3 2282 199.2 2284 199.2 2284 199.2 2286 199.1 2286 199.1 2288 199.1 2288 199.2 2290 199.2 2290 199.2 2292 199.3 2292 199.3 2294 199.4 2294 199.5 2296 199.5 2296 199.6 2298 199.7 2298 199.9 2300 200.0 2300 200.1 2302 200.3 2302 200.4 2304 200.6 2304 200.8 2306 200.9 2306 201.1 2308 201.3 2308 201.6 2310 201.8 2310 202.0 2312 202.3 2312 202.5 2314 202.8 2314 203.1 2316 203.3 2316 203.6 2318 203.9 2318 204.2 2320 204.6 2320 204.9 2322 205.3 2322 205.6 2324 206.0 2324 206.3 2326 206.7 2326 207.1 2328 207.5 2328 207.9 2330 208.4 2330 208.8 2332 209.2 2332 209.7 2334 210.1 2334 210.6 2336 211.1 2336 211.6 2338 212.1 2338 212.6 2340 213.1 2340 213.6 2342 214.2 2342 214.7 2344 215.3 2344 215.9 2346 216.4 2346 217.0 2348 217.6 2348 218.2 2350 218.8 2350 219.4 2352 220.1 2352 220.7 2354 221.4 2354 222.0 2356 222.7 2356 223.4 2358 224.1 2358 224.8 2360 225.5 2360 226.2 2362 226.9 2362 227.6 2364 228.4 2364 229.1 2366 229.9 2366 230.6 2368 231.4 2368 232.2 2370 233.0 2370 233.8 2372 234.6 2372 235.4 2374 236.3 2374 237.1 2376 237.9 2376 238.8 2378 239.7 2378 240.5 2380 241.4 2380 242.3 2382 243.2 2382 244.1 2384 245.0 2384 245.9 2386 246.9 2386 247.8 2388 248.8 2388 249.7 2390 250.7 2390 251.6 2392 252.6 2392 253.6 2394 254.6 2394 255.6 2396 256.6 2396 257.6 2398 258.7 2398 259.7 2400 260.7 2400 261.8 2402 262.8 2402 263.9 2404 265.0 2404 266.0 2406 267.1 2406 268.2 2408 269.3 2408 270.4 2410 271.5 2410 272.7 2412 273.8 2412 274.9 2414 276.1 2414 277.2 2416 278.4 2416 279.6 2418 280.7 2418 281.9 2420 283.1 2420 284.3 2422 285.5 2422 286.7 2424 287.9 2424 289.1 2426 290.3 2426 291.6 2428 292.8 2428 294.1 2430 295.3 2430 296.6 2432 297.8 2432 299.1 2434 300.4 2434 301.6 2436 302.9 2436 304.2 2438 305.5 2438 306.8 2440 308.1 2440 309.5 2442 310.8 2442 312.1 2444 313.4 2444 314.8 2446 316.1 2446 317.5 2448 318.8 2448 320.2 2450 321.6 2450 322.9 2452 324.3 2452 325.7 2454 327.1 2454 328.5 2456 329.9 2456 331.3 2458 332.7 2458 334.1 2460 335.5 2460 336.9 2462 338.3 2462 339.8 2464 341.2 2464 342.6 2466 344.1 2466 345.5 2468 347.0 2468 348.4 2470 349.9 2470 351.3 2472 352.8 2472 354.3 2474 355.8 2474 357.2 2476 358.7 2476 360.2 2478 361.7 2478 363.2 2480 364.7 2480 366.2 2482 367.7 2482 369.2 2484 370.7 2484 372.2 2486 373.7 2486 375.3 2488 376.8 2488 378.3 2490 379.8 2490 381.4 2492 382.9 2492 384.5 2494 386.0 2494 387.5 2496 389.1 2496 390.6 2498 392.2 2498 393.7 2500 395.3 2500 396.8 2502 398.4 2502 400.0 2504 401.5 2504 403.1 2506 404.7 2506 406.2 2508 407.8 2508 409.4 2510 411.0 2510 412.5 2512 414.1 2512 415.7 2514 417.3 2514 418.9 2516 420.4 2516 422.0 2518 423.6 2518 425.2 2520 426.8 2520 428.4 2522 430.0 2522 431.6 2524 433.2 2524 434.8 2526 436.4 2526 437.9 2528 439.5 2528 441.1 2530 442.7 2530 444.3 2532 445.9 2532 447.5 2534 449.1 2534 450.7 2536 452.3" stroke="#00ff00" stroke-width="1" fill="none"/>
</svg>
<div class="a" style="left:0;width:38.5px;top:142px;text-align:right;font-size:13px;line-height:16px;color:#c8c8c8;-webkit-text-stroke:0.3px #c8c8c8">1.2V</div>
<div class="a" style="left:0;width:38.5px;top:192px;text-align:right;font-size:13px;line-height:16px;color:#c8c8c8;-webkit-text-stroke:0.3px #c8c8c8">1.0V</div>
<div class="a" style="left:0;width:38.5px;top:243px;text-align:right;font-size:13px;line-height:16px;color:#c8c8c8;-webkit-text-stroke:0.3px #c8c8c8">0.8V</div>
<div class="a" style="left:0;width:38.5px;top:293px;text-align:right;font-size:13px;line-height:16px;color:#c8c8c8;-webkit-text-stroke:0.3px #c8c8c8">0.6V</div>
<div class="a" style="left:0;width:38.5px;top:344px;text-align:right;font-size:13px;line-height:16px;color:#c8c8c8;-webkit-text-stroke:0.3px #c8c8c8">0.4V</div>
<div class="a" style="left:0;width:38.5px;top:395px;text-align:right;font-size:13px;line-height:16px;color:#c8c8c8;-webkit-text-stroke:0.3px #c8c8c8">0.2V</div>
<div class="a" style="left:0;width:38.5px;top:445px;text-align:right;font-size:13px;line-height:16px;color:#c8c8c8;-webkit-text-stroke:0.3px #c8c8c8">0.0V</div>
<div class="a" style="left:0;width:38.5px;top:496px;text-align:right;font-size:13px;line-height:16px;color:#c8c8c8;-webkit-text-stroke:0.3px #c8c8c8">-0.2V</div>
<div class="a" style="left:0;width:38.5px;top:547px;text-align:right;font-size:13px;line-height:16px;color:#c8c8c8;-webkit-text-stroke:0.3px #c8c8c8">-0.4V</div>
<div class="a" style="left:0;width:38.5px;top:597px;text-align:right;font-size:13px;line-height:16px;color:#c8c8c8;-webkit-text-stroke:0.3px #c8c8c8">-0.6V</div>
<div class="a" style="left:0;width:38.5px;top:648px;text-align:right;font-size:13px;line-height:16px;color:#c8c8c8;-webkit-text-stroke:0.3px #c8c8c8">-0.8V</div>
<div class="a" style="left:0;width:38.5px;top:698px;text-align:right;font-size:13px;line-height:16px;color:#c8c8c8;-webkit-text-stroke:0.3px #c8c8c8">-1.0V</div>
<div class="a" style="left:-4px;width:100px;top:712px;text-align:center;font-size:13px;line-height:16px;color:#c8c8c8;-webkit-text-stroke:0.3px #c8c8c8">0ms</div>
<div class="a" style="left:245px;width:100px;top:712px;text-align:center;font-size:13px;line-height:16px;color:#c8c8c8;-webkit-text-stroke:0.3px #c8c8c8">5ms</div>
<div class="a" style="left:494px;width:100px;top:712px;text-align:center;font-size:13px;line-height:16px;color:#c8c8c8;-webkit-text-stroke:0.3px #c8c8c8">10ms</div>
<div class="a" style="left:743px;width:100px;top:712px;text-align:center;font-size:13px;line-height:16px;color:#c8c8c8;-webkit-text-stroke:0.3px #c8c8c8">15ms</div>
<div class="a" style="left:992px;width:100px;top:712px;text-align:center;font-size:13px;line-height:16px;color:#c8c8c8;-webkit-text-stroke:0.3px #c8c8c8">20ms</div>
<div class="a" style="left:1241px;width:100px;top:712px;text-align:center;font-size:13px;line-height:16px;color:#c8c8c8;-webkit-text-stroke:0.3px #c8c8c8">25ms</div>
<div class="a" style="left:1490px;width:100px;top:712px;text-align:center;font-size:13px;line-height:16px;color:#c8c8c8;-webkit-text-stroke:0.3px #c8c8c8">30ms</div>
<div class="a" style="left:1739px;width:100px;top:712px;text-align:center;font-size:13px;line-height:16px;color:#c8c8c8;-webkit-text-stroke:0.3px #c8c8c8">35ms</div>
<div class="a" style="left:1988px;width:100px;top:712px;text-align:center;font-size:13px;line-height:16px;color:#c8c8c8;-webkit-text-stroke:0.3px #c8c8c8">40ms</div>
<div class="a" style="left:2237px;width:100px;top:712px;text-align:center;font-size:13px;line-height:16px;color:#c8c8c8;-webkit-text-stroke:0.3px #c8c8c8">45ms</div>
<div class="a" style="left:2450px;width:101px;top:712px;text-align:right;font-size:13px;line-height:16px;color:#c8c8c8;-webkit-text-stroke:0.3px #c8c8c8">50ms</div>
<div class="a" style="left:645px;top:131px;font-size:13px;line-height:16px;color:#00ff00;font-weight:bold">V(n005)</div>
<div class="a" style="left:1889px;top:131px;font-size:13px;line-height:16px;color:#ff0000;font-weight:bold">V(n003)</div>
<svg class="full" width="2560" height="1440" style="left:0;top:0" shape-rendering="crispEdges" stroke-linecap="square">
<circle cx="1343" cy="829" r="35.5" stroke="#000080" stroke-width="1" fill="none"/>
<ellipse cx="962" cy="1173.5" rx="35.5" ry="36" stroke="#000080" stroke-width="1" fill="none"/>
<path d="M1343.5 784.5 L1434.5 784.5 L1434.5 856.5 M1414.5 856.5 L1454.5 856.5 L1434.5 876.5 L1414.5 856.5 M1343.5 874.5 L1343.5 929.5 M1198.5 911.5 L1343.5 911.5 M1198.5 983.5 L1198.5 1165.5 M1107.5 1019.5 L1107.5 1001.5 L1126.5 1001.5 M1087.5 1019.5 L1127.5 1019.5 L1107.5 1039.5 L1087.5 1019.5 M1343.5 1019.5 L1416.5 1019.5 M1488.5 1019.5 L1542.5 1019.5 L1542.5 1038.5 M1542.5 1128.5 L1542.5 1164.5 M1522.5 1164.5 L1562.5 1164.5 L1542.5 1184.5 L1522.5 1164.5 M1198.5 1074.5 L1271.5 1074.5 M962.5 1128.5 L1071.5 1128.5 M1161.5 1128.5 L1343.5 1128.5 M1343.5 1128.5 L1343.5 1165.5 M962.5 1218.5 L962.5 1273.5 L1343.5 1273.5 L1343.5 1255.5 M1198.5 1255.5 L1198.5 1328.5 M1178.5 1328.5 L1218.5 1328.5 L1198.5 1348.5 L1178.5 1328.5" stroke="#0000ff" stroke-width="1" fill="none"/>
<path d="M1343.5 784.5 L1343.5 793.5 M1343.5 865.5 L1343.5 874.5 M1334.5 806.5 L1352.5 806.5 M1334.5 852.5 L1352.5 852.5 M1343.5 843.5 L1343.5 861.5 M962.5 1128.5 L962.5 1137.5 M962.5 1209.5 L962.5 1218.5 M953.5 1151.5 L971.5 1151.5 M962.5 1142.5 L962.5 1160.5 M953.5 1196.5 L971.5 1196.5 M1198.5 911.5 L1198.5 920.5 L1216.5 929.5 L1180.5 947.5 L1216.5 965.5 L1180.5 983.5 L1198.5 992.5 L1198.5 1001.5 M1343.5 929.5 L1343.5 938.5 L1361.5 947.5 L1325.5 965.5 L1361.5 983.5 L1325.5 1001.5 L1343.5 1010.5 L1343.5 1019.5 M1198.5 1165.5 L1198.5 1174.5 L1216.5 1183.5 L1180.5 1201.5 L1216.5 1219.5 L1180.5 1237.5 L1198.5 1246.5 L1198.5 1255.5 M1343.5 1165.5 L1343.5 1174.5 L1361.5 1183.5 L1325.5 1201.5 L1361.5 1219.5 L1325.5 1237.5 L1343.5 1246.5 L1343.5 1255.5 M1542.5 1038.5 L1542.5 1047.5 L1560.5 1056.5 L1524.5 1074.5 L1560.5 1092.5 L1524.5 1110.5 L1542.5 1119.5 L1542.5 1128.5 M1071.5 1128.5 L1080.5 1128.5 L1089.5 1110.5 L1107.5 1146.5 L1125.5 1110.5 L1143.5 1146.5 L1152.5 1128.5 L1161.5 1128.5 M1126.5 1001.5 L1157.5 1001.5 M1157.5 983.5 L1157.5 1019.5 M1166.5 983.5 L1166.5 1019.5 M1166.5 1001.5 L1198.5 1001.5 M1416.5 1019.5 L1447.5 1019.5 M1447.5 1001.5 L1447.5 1037.5 M1456.5 1001.5 L1456.5 1037.5 M1456.5 1019.5 L1488.5 1019.5 M1289.5 1038.5 L1289.5 1110.5 M1271.5 1074.5 L1289.5 1074.5 M1289.5 1056.5 L1343.5 1020.5 M1289.5 1093.5 L1315.5 1110.5 M1320.5 1106.5 L1311.5 1115.5 L1343.5 1128.5 L1320.5 1106.5" stroke="#000080" stroke-width="1" fill="none"/>
<rect x="1338" y="906" width="11" height="11" fill="#0000ff"/>
<rect x="1193" y="996" width="11" height="11" fill="#0000ff"/>
<rect x="1338" y="1014" width="11" height="11" fill="#0000ff"/>
<rect x="1193" y="1069" width="11" height="11" fill="#0000ff"/>
<rect x="1338" y="1123" width="11" height="11" fill="#0000ff"/>
<rect x="1193" y="1268" width="11" height="11" fill="#0000ff"/>
</svg>
<svg class="full" width="2560" height="1440" style="left:0;top:0">
<text x="1280" y="794" font-family="Liberation Sans" font-weight="bold" font-size="28.5" letter-spacing="0.4" fill="#000">V2</text>
<text x="1283" y="884" font-family="Liberation Sans" font-weight="bold" font-size="28.5" letter-spacing="0.4" fill="#000">15</text>
<text x="1220" y="948" font-family="Liberation Sans" font-weight="bold" font-size="28.5" letter-spacing="0.4" fill="#000">R3</text>
<text x="1221" y="989" font-family="Liberation Sans" font-weight="bold" font-size="28.5" letter-spacing="0.4" fill="#000">32kR</text>
<text x="1144" y="977" font-family="Liberation Sans" font-weight="bold" font-size="28.5" letter-spacing="0.4" fill="#000">C1</text>
<text x="1124" y="1043" font-family="Liberation Sans" font-weight="bold" font-size="28.5" letter-spacing="0.4" fill="#000">0.1µC</text>
<text x="934" y="975" font-family="Liberation Sans" font-weight="bold" font-size="28.5" letter-spacing="0" fill="#000">.tran 50m</text>
<text x="1365" y="966" font-family="Liberation Sans" font-weight="bold" font-size="28.5" letter-spacing="0.4" fill="#000">R6</text>
<text x="1366" y="1007" font-family="Liberation Sans" font-weight="bold" font-size="28.5" letter-spacing="0.4" fill="#000">5kR</text>
<text x="1434" y="995" font-family="Liberation Sans" font-weight="bold" font-size="28.5" letter-spacing="0.4" fill="#000">C3</text>
<text x="1414" y="1062" font-family="Liberation Sans" font-weight="bold" font-size="28.5" letter-spacing="0.4" fill="#000">0.1µC</text>
<text x="1334" y="1065" font-family="Liberation Sans" font-weight="bold" font-size="28.5" letter-spacing="0.4" fill="#000">Q1</text>
<text x="1333" y="1105" font-family="Liberation Sans" font-weight="bold" font-size="28.5" letter-spacing="0.4" fill="#000">NPN</text>
<text x="988" y="1138" font-family="Liberation Sans" font-weight="bold" font-size="28.5" letter-spacing="0.4" fill="#000">V1</text>
<text x="1097" y="1104" font-family="Liberation Sans" font-weight="bold" font-size="28.5" letter-spacing="0.4" fill="#000">R4</text>
<text x="1090" y="1171" font-family="Liberation Sans" font-weight="bold" font-size="28.5" letter-spacing="0.4" fill="#000">50R</text>
<text x="1027" y="1229" font-family="Liberation Sans" font-weight="bold" font-size="28.5" letter-spacing="0" fill="#000">SINE(0 1 50)</text>
<text x="1220" y="1203" font-family="Liberation Sans" font-weight="bold" font-size="28.5" letter-spacing="0.4" fill="#000">R2</text>
<text x="1221" y="1242" font-family="Liberation Sans" font-weight="bold" font-size="28.5" letter-spacing="0.4" fill="#000">5kR</text>
<text x="1365" y="1203" font-family="Liberation Sans" font-weight="bold" font-size="28.5" letter-spacing="0.4" fill="#000">R1</text>
<text x="1366" y="1242" font-family="Liberation Sans" font-weight="bold" font-size="28.5" letter-spacing="0.4" fill="#000">500R</text>
<text x="1564" y="1074" font-family="Liberation Sans" font-weight="bold" font-size="28.5" letter-spacing="0.4" fill="#000">R5</text>
<text x="1565" y="1116" font-family="Liberation Sans" font-weight="bold" font-size="28.5" letter-spacing="0.4" fill="#000">470R</text>
</svg>
<svg class="full" width="1260" height="90" style="left:0;top:0" stroke-linecap="square">
<path d="M6 55.5 V80.5" stroke="#222" stroke-width="2" stroke-dasharray="1.4 1.4" stroke-linecap="butt"/>
<path d="M77.5 55 V80" stroke="#a8a8a8" stroke-width="1"/>
<path d="M116.5 55 V80" stroke="#a8a8a8" stroke-width="1"/>
<path d="M155.5 55 V80" stroke="#a8a8a8" stroke-width="1"/>
<path d="M225.5 55 V80" stroke="#a8a8a8" stroke-width="1"/>
<path d="M357.5 55 V80" stroke="#a8a8a8" stroke-width="1"/>
<path d="M427.5 55 V80" stroke="#a8a8a8" stroke-width="1"/>
<path d="M528.5 55 V80" stroke="#a8a8a8" stroke-width="1"/>
<path d="M660.5 55 V80" stroke="#a8a8a8" stroke-width="1"/>
<path d="M730.5 55 V80" stroke="#a8a8a8" stroke-width="1"/>
<path d="M1238.5 50 V85" stroke="#a8a8a8" stroke-width="1"/>
<g transform="translate(14,53)"><path d="M4.5 3.4 H18.5 L23.5 8.3 V24.2 H4.5 Z" fill="#fff" stroke="#000" stroke-width="1.2" stroke-linejoin="round"/><path d="M18.5 3.4 V8.3 H23.5" fill="#fff" stroke="#000" stroke-width="1.1"/><path d="M4.8 18.8 L8 14.8 L11 11.6 L13.5 10 V11.8 L11.4 13.2 L11 15.9 H14.8 L12.8 18.8 Z" fill="#ff0000"/><path d="M14.3 12.5 L16.2 9.9 H23 L20 14 L18.2 16.8 L15.6 18.8 H14.2 L15.7 16.6 L17 14 L16.6 12.5 Z" fill="#ff0000"/><path d="M35.3 9.2 L38 6.3 H41.5 L44 9.5 H50.5 V13.5 H42.5 L35.3 21.5 Z" fill="#ffff50" stroke="#000" stroke-width="1.3"/><path d="M35.3 9.2 V21.5 L42.5 13.5 H56.5 V15.5 L50.5 21.5 H35.3" fill="#808000" stroke="#000" stroke-width="1.3" stroke-linejoin="round"/><path d="M47.4 5.4 Q47.4 3.5 49 3.4 H52.3 L53.4 5" fill="none" stroke="#000" stroke-width="1.2"/><path d="M52 8.6 H56.6 V4 Z" fill="#000"/></g>
<g transform="translate(88,55)"><path d="M0.7 0.8 H20 V21 H1.8 L0.7 20 Z" fill="#808000" stroke="#000" stroke-width="1.4"/><rect x="3.5" y="1.3" width="13" height="9" fill="#fff" stroke="#000" stroke-width="1"/><rect x="3.5" y="13.5" width="13" height="7" fill="#000"/><rect x="11.8" y="15.2" width="3" height="4" fill="#fff"/><rect x="17.3" y="2" width="2" height="2" fill="#fff"/></g>
<g transform="translate(122,53)"><path d="M3.4 6 L4.3 5.2 H6.8 L7.4 6.5 H9.7 L10.6 5.4 L11.6 4.8 L12.4 3.5 H18.8 L19.6 4.6 L21.2 5.6 L23 6.6 L24.6 8 L26.4 9.6 V14.5 M3.4 6 V11.6 L4.3 12.6 H6.6 L7.6 11.4 L9 10.5 H10.1 L10.6 12 L18.5 12.4 L20 11 L21.6 10 H23.5 L24.6 11 L25.6 12.6 L26.4 12.6" fill="#fff" stroke="#000" stroke-width="1.3" stroke-linejoin="round"/><rect x="13.8" y="12.8" width="2.3" height="6.5" fill="#000080"/><rect x="16" y="12.8" width="2" height="6.5" fill="#0000ff"/><rect x="12" y="19" width="4" height="5.6" fill="#000080"/><rect x="16" y="19" width="3.2" height="5.6" fill="#0000ff"/></g>
<g transform="translate(160,53)"><path d="M19 3 H24.8 L22.5 7 H19 Z" fill="#000"/><rect x="20.5" y="4.2" width="1.6" height="1.6" fill="#fff"/><path d="M19.8 7.5 L17.5 10 L15.5 13.5 L13.8 15.5" fill="none" stroke="#000" stroke-width="4" stroke-linejoin="round"/><path d="M17 9.3 L14.5 7.3 L13 9 L10.8 9.5 M19.5 11 L20.5 13.5 L22.5 14.6 L24.5 12.4 H26.5 M14 15.5 L10.5 17.2 L9.8 18.6 H4.6 V21 M16 16 L18.6 18.4 L19 21 L17 23 L16.6 24.5 H18.5" fill="none" stroke="#000" stroke-width="1.5" stroke-linejoin="round"/><path d="M7 3.4 H9.5 L11.5 5.5 M4 6.4 H6.5 L8.5 8.5" fill="none" stroke="#999" stroke-width="0.9"/></g>
<g transform="translate(160,53)"><path d="M43 17.5 V6.5 H44.5 M45 17 V4.5 L46 3.5 H48.5 L49.5 4.5 V17 M49.5 5 H51 L52 6 V17 M52 8 H54 L55 9.5 V21.5 L54 23 V24 H42.5 V23 L40 20.5 L38.5 17 L37.5 15 V13.5 L39 13 H40.5 L41.5 14 L43 17.5" fill="#fff" stroke="#a4a4a4" stroke-width="1.5" stroke-linejoin="round"/></g>
<g transform="translate(235,55)"><circle cx="8.5" cy="9.8" r="7.3" fill="#fff" stroke="#000" stroke-width="1.6"/><path d="M13.5 15 L21.5 23" stroke="#000" stroke-width="3.2"/><path d="M3 6.5 L5.5 4 M11 15 L14 12" stroke="#00ffff" stroke-width="1"/><path d="M4 9.8 H13 M8.5 5.3 V14.3" stroke="#000" stroke-width="1.8"/></g>
<g transform="translate(266,55)"><circle cx="8.5" cy="9.8" r="7.3" fill="#fff" stroke="#a4a4a4" stroke-width="1.6"/><path d="M13.5 15 L21.5 23" stroke="#a4a4a4" stroke-width="3.2"/><path d="M4 8 L6 5.5 M9 15 L11 12" stroke="#a4a4a4" stroke-width="1"/></g>
<g transform="translate(297,55)"><circle cx="8.5" cy="9.8" r="7.3" fill="#fff" stroke="#000" stroke-width="1.6"/><path d="M13.5 15 L21.5 23" stroke="#000" stroke-width="3.2"/><path d="M3 6.5 L5.5 4 M11 15 L14 12" stroke="#00ffff" stroke-width="1"/><path d="M4 9.8 H13" stroke="#000" stroke-width="2"/></g>
<g transform="translate(327,55)"><circle cx="8.5" cy="9.8" r="7.3" fill="#fff" stroke="#000" stroke-width="1.6"/><path d="M13.5 15 L21.5 23" stroke="#000" stroke-width="3.2"/><path d="M3 6.5 L5.5 4 M11 15 L14 12" stroke="#00ffff" stroke-width="1"/><path d="M0.8 1 L19 19 M0.8 17.5 L17 1.5 M12 17 L14 21" stroke="#ff0000" stroke-width="2"/></g>
<g transform="translate(366,55)"><path d="M1.2 0 V22 M0 22 H22" stroke="#000" stroke-width="1.5"/><path d="M0 2.3 H1 M0 7.3 H1 M0 12.3 H1 M0 17.3 H1 M1.3 22 V24 M6.3 22 V24 M11.3 22 V24 M16.3 22 V24 M21.3 22 V24" stroke="#000" stroke-width="1.3"/><path d="M1.5 6 L6 1 L11 7 L16 1 L21.5 6.5" fill="none" stroke="#000080" stroke-width="1.1"/><path d="M1.5 10.5 L4 9 H7 L9 10 H14 L16 12 L19 11 L21.5 10.5" fill="none" stroke="#ff0000" stroke-width="1.3"/><path d="M1.5 15.5 H7 V17.5 H10 V15.5 H16 V17.5 H22" fill="none" stroke="#000090" stroke-width="1.3"/></g>
<g transform="translate(397,55)"><path d="M1.2 0 V22 M0 22 H22" stroke="#a4a4a4" stroke-width="1.3"/><path d="M0 2.3 H1 M0 7.3 H1 M0 12.3 H1 M0 17.3 H1 M1.3 22 V24 M6.3 22 V24 M11.3 22 V24 M16.3 22 V24 M21.3 22 V24" stroke="#a4a4a4" stroke-width="1.2"/><path d="M5 7 Q10 2 18 1 M5 15 Q10 19 17 21.5 M6 7 V15 M4 9 L6 6.5 L8 9 M4 13 L6 15.5 L8 13 M18 1 V21.5 M16 3 L18 1 L20.5 3.5 M16 19 L18 21.5 L20.5 19" fill="none" stroke="#a4a4a4" stroke-width="1"/></g>
<g transform="translate(436,55)"><rect x="1" y="1" width="23" height="21" fill="#fff" stroke="#000080" stroke-width="1.5"/><rect x="1" y="1" width="23" height="4" fill="#000080"/><rect x="1" y="11" width="23" height="4" fill="#000080"/><path d="M2.5 2.5 h1.5 v1.5 h-1.5z M18 2.5 h1.5 v1.5 h-1.5z M21 2.5 h1.5 v1.5 h-1.5z M2.5 12.5 h1.5 v1.5 h-1.5z M18 12.5 h1.5 v1.5 h-1.5z M21 12.5 h1.5 v1.5 h-1.5z" fill="#fff"/></g>
<g transform="translate(467,55)"><rect x="1" y="1" width="14" height="11" fill="#fff" stroke="#000080" stroke-width="1.4"/><rect x="1" y="1" width="14" height="3.2" fill="#000080"/><rect x="2.5" y="2" width="1.5" height="1.5" fill="#fff"/><rect x="3.5" y="4" width="14" height="10" fill="#fff" stroke="#000080" stroke-width="1.4"/><rect x="3.5" y="4" width="14" height="3.2" fill="#000080"/><rect x="5.0" y="5" width="1.5" height="1.5" fill="#fff"/><rect x="9.5" y="8" width="15" height="14" fill="#fff" stroke="#000080" stroke-width="1.4"/><rect x="9.5" y="8" width="15" height="3.2" fill="#000080"/><rect x="11.0" y="9" width="1.5" height="1.5" fill="#fff"/></g>
<g transform="translate(498,55)"><rect x="1" y="1" width="12" height="10" fill="#fff" stroke="#000080" stroke-width="1.4"/><rect x="1" y="1" width="12" height="3.2" fill="#000080"/><rect x="2.5" y="2" width="1.5" height="1.5" fill="#fff"/><rect x="3.5" y="5" width="12" height="9" fill="#fff" stroke="#000080" stroke-width="1.4"/><rect x="3.5" y="5" width="12" height="3.2" fill="#000080"/><rect x="5.0" y="6" width="1.5" height="1.5" fill="#fff"/><rect x="9" y="9" width="12" height="13" fill="#fff" stroke="#000080" stroke-width="1.4"/><rect x="9" y="9" width="12" height="3.2" fill="#000080"/><rect x="10.5" y="10" width="1.5" height="1.5" fill="#fff"/><path d="M17 5 L19.5 2.5 M17 2.5 H17.5 V5.5 H20" fill="none" stroke="#000" stroke-width="1.3"/></g>
<g transform="translate(542,55)"><path d="M3.5 1 L7 13 M10.5 1 L7 13 L5 15.5 M7 13 L9 15.5" fill="none" stroke="#000" stroke-width="1.3"/><ellipse cx="3.5" cy="19" rx="2.5" ry="3" fill="none" stroke="#000080" stroke-width="1.4"/><ellipse cx="11" cy="19" rx="2.5" ry="3" fill="none" stroke="#000080" stroke-width="1.4"/></g>
<g transform="translate(570,55)"><path d="M0.8 1 H8 L11 4 V15 H0.8 Z" fill="#fff" stroke="#000" stroke-width="1.3"/><path d="M2.5 5 H7 M2.5 8 H9 M2.5 11 H9" stroke="#000" stroke-width="1"/><path d="M9.3 5.3 H17 L21.5 9.5 V22.5 H9.3 Z" fill="#fff" stroke="#000080" stroke-width="1.4"/><path d="M11.5 12 H19 M11.5 15 H19 M11.5 18 H19" stroke="#000080" stroke-width="1"/></g>
<g transform="translate(601,55)"><path d="M0.8 4 H19.5 V20 L17 22 H0.8 Z" fill="#a8a8a8" stroke="#a4a4a4" stroke-width="1"/><rect x="6" y="1" width="8" height="4" fill="#a8a8a8"/><path d="M10 11.5 H17 L20.5 14.5 V22.5 H10 Z" fill="#fff" stroke="#a4a4a4" stroke-width="1.2"/><path d="M12 16 H18 M12 19 H18" stroke="#a4a4a4" stroke-width="1"/></g>
<g transform="translate(631,55)"><path d="M0.5 22 V13 L2.5 10 V4 H6.5 V2 H8 V10 L10 13 V22 Z M13 22 V13 L15 10 V2 H16.5 V4 H20.5 V10 L22.5 13 V22 Z" fill="#000"/><path d="M8 12 H15 V17 H8 Z" fill="#000"/><rect x="3" y="5" width="2" height="3" fill="#fff"/><rect x="16" y="5" width="2" height="3" fill="#fff"/><rect x="2" y="15" width="2" height="3" fill="#fff"/><rect x="14.5" y="15" width="2" height="3" fill="#fff"/></g>
<g transform="translate(671,55)"><path d="M7 11 V2 H15 L17.5 4.5 V11" fill="#ddd" stroke="#000" stroke-width="1.2"/><path d="M0.8 13 L3 10.5 H20 L21.5 12 V20 H0.8 Z" fill="#d8d8d8" stroke="#000" stroke-width="1.3"/><path d="M4 20 V22.5 H19 V20" fill="#fff" stroke="#000" stroke-width="1.2"/></g>
<g transform="translate(700,55)"><path d="M5.5 10 L8 1.5 H22 L19 10 Z" fill="#fff" stroke="#000" stroke-width="1.2"/><path d="M9.5 4 H18.5 M8.5 7 H17.5" stroke="#000" stroke-width="1.2"/><path d="M0.8 11 L5 9 H23.5 V18 L19.5 22.5 H0.8 Z" fill="#fff" stroke="#000" stroke-width="1.3"/><path d="M0.8 15 H19.5 L23.5 11 M19.5 15 V22.5 M0.8 18.5 H19.5" fill="none" stroke="#000" stroke-width="1.2"/><path d="M10 13 H14" stroke="#e0c000" stroke-width="1.2"/></g>
<g transform="translate(742,55)"><path d="M0.5 21.3 H21.5" stroke="#0000ff" stroke-width="1.2"/><path d="M1 20 L2 13 L11.5 2 L14.5 4.5 L5 16 Z" fill="#ffff00" stroke="#000" stroke-width="1.4"/><circle cx="13.3" cy="2.7" r="2.3" fill="#ff0000"/><path d="M1 20 L2.5 16.5 L4 17.5 Z" fill="#000"/></g>
<g transform="translate(770,55)"><path d="M11.5 0.5 V10.5 M0.5 10.5 H22.5 L11.5 22.5 Z" fill="none" stroke="#000" stroke-width="1.5" stroke-linejoin="miter"/></g>
<g transform="translate(801,55)"><rect x="0.8" y="1.5" width="20.5" height="13" rx="2.5" fill="#fff" stroke="#000" stroke-width="1.5"/><path d="M1.5 3 V13" stroke="#d0c000" stroke-width="1"/><path d="M11 15 V22.5" stroke="#000" stroke-width="1.5"/><text x="6.3" y="12.3" font-family="Liberation Mono" font-weight="bold" font-size="12" fill="#000">A</text></g>
<g transform="translate(836,55)"><path d="M8.5 0 V2.5 L14.5 6 L1.5 12.5 L8 16.5 V22.5" fill="none" stroke="#000" stroke-width="1.4"/></g>
<g transform="translate(866,55)"><path d="M9 0.5 V8.5 M9 14.5 V22.5 M1 8.5 H17 M1 14.5 H17" stroke="#000" stroke-width="1.8"/></g>
<g transform="translate(900,55)"><path d="M0.5 1.5 Q3 0 5.5 2.5 Q6.5 6 2.5 9.5 Q6 11 6.5 14.5 Q6 19.5 3 20.5 L1.5 21.5" fill="none" stroke="#000" stroke-width="1.6"/></g>
<g transform="translate(926,55)"><path d="M11.5 0 V22.5 M0.5 5.5 H22.5 L11.5 17.5 Z M0.5 17.5 H22.5" fill="none" stroke="#000" stroke-width="1.4"/></g>
<g transform="translate(956,55)"><path d="M5 2.5 H12 Q19 3 19.5 11 Q19 19 12 19 H5 Z" fill="#fff" stroke="#000" stroke-width="1.4"/><path d="M0.3 6.5 H5 M0.3 15.5 H5 M19.5 11 H24" stroke="#000" stroke-width="1.5"/></g>
<g transform="translate(987,55)"><path d="M8 22 L3 14.5 L1 11 L2.5 9.5 L6 12.5 L4 4 L6 2.5 L8.5 9 L8 1.5 L10.5 1 L12 8.5 L13 2.5 L15 2.5 L15.5 9 L17 5 L19 6 L18.5 13.5 L16 18 V22 Z" fill="#fff" stroke="#000" stroke-width="1.4" stroke-linejoin="round"/></g>
<g transform="translate(1020,55)"><path d="M5 20.5 L1 13 L1.5 10 L4 10 L4 5 L6.5 4 L7.5 5 L9 3.5 L11 4 L12 5 L14 5 L15.5 7 L17 8 L18 14 L15 17 V20.5 Z" fill="#fff" stroke="#000" stroke-width="1.4" stroke-linejoin="round"/><path d="M7 6 V9 M10 5 V8.5 M13 6 V9" stroke="#000" stroke-width="1"/></g>
<g transform="translate(1051,55)"><path d="M3 10 Q4.5 3 10.5 3 Q18 3.5 18.5 10.5 Q18.5 17.5 11 18.5" fill="none" stroke="#a4a4a4" stroke-width="1.4"/><path d="M0.5 7.5 L3 11 L7 8.5" fill="none" stroke="#a4a4a4" stroke-width="1.5"/></g>
<g transform="translate(1082,55)"><path d="M18 10 Q16.5 3 10.5 3 Q3 3.5 2.5 10.5 Q2.5 17.5 10 18.5" fill="none" stroke="#a4a4a4" stroke-width="1.4"/><path d="M20.5 7.5 L18 11 L14 8.5" fill="none" stroke="#a4a4a4" stroke-width="1.5"/></g>
<g transform="translate(1111,55)"><path d="M0.5 9.5 H8 M0.5 9.5 V22 H8 M0.5 15.5 H6" fill="none" stroke="#a4a4a4" stroke-width="2"/><path d="M10 14 V9.5 H24 V14 M13.5 9.5 V14 M17 9.5 V14" fill="none" stroke="#a4a4a4" stroke-width="2"/><path d="M3.5 4.5 L6.5 0.8 H17 L20 3.5 M20 3.5 L19.5 0.8 M20 3.5 L17.5 4" fill="none" stroke="#a4a4a4" stroke-width="0.9"/></g>
<g transform="translate(1142,55)"><path d="M0.5 9.5 H7.5 M0.5 9.5 V22 H7.5 M0.5 15.5 H6" fill="none" stroke="#a4a4a4" stroke-width="2"/><path d="M16.5 9.5 H24 V22 H16.5 M24 15.5 H18.5" fill="none" stroke="#a4a4a4" stroke-width="2"/><path d="M3.5 4.5 L6.5 0.8 H17 L20 3.5 M20 3.5 L19.5 0.8 M20 3.5 L17.5 4" fill="none" stroke="#a4a4a4" stroke-width="0.9"/></g>
<g transform="translate(1173,55)"><text x="0" y="19" font-family="Liberation Serif" font-style="italic" font-weight="bold" font-size="19" fill="#000">A</text><text x="11" y="19" font-family="Liberation Serif" font-style="italic" font-weight="bold" font-size="14" fill="#000">a</text></g>
<g transform="translate(1205,55)"><text x="0" y="16" font-family="Liberation Sans" font-size="15" fill="#000" letter-spacing="0.3">.op</text></g>
</svg>
<div class="a" style="left:0;top:1384px;width:2560px;height:56px;background:#2a2e32"></div>
<div class="a" style="left:249px;top:1384px;width:62px;height:56px;background:#43474c"></div>
<div class="a" style="left:249px;top:1384px;width:62px;height:3px;background:#6a6e72"></div>
<div class="a" style="left:377px;top:1384px;width:62px;height:56px;background:#3a3e43"></div>
<div class="a" style="left:505px;top:1384px;width:62px;height:56px;background:#43474c"></div>
<div class="a" style="left:505px;top:1384px;width:62px;height:3px;background:#6a6e72"></div>
<div class="a" style="left:569px;top:1384px;width:62px;height:56px;background:#326789"></div>
<div class="a" style="left:569px;top:1384px;width:62px;height:3px;background:#3daee9"></div>
<svg class="full" width="2560" height="1440" style="left:0;top:0">
<defs>
<linearGradient id="gset" x1="0" y1="0" x2="1" y2="1"><stop offset="0" stop-color="#555"/><stop offset="0.5" stop-color="#2b2b2b"/><stop offset="1" stop-color="#222"/></linearGradient>
<linearGradient id="gdis" x1="0" y1="0" x2="0" y2="1"><stop offset="0" stop-color="#1ab6f7"/><stop offset="1" stop-color="#1b80ea"/></linearGradient>
<linearGradient id="gterm" x1="0" y1="0" x2="1" y2="1"><stop offset="0" stop-color="#4a5150"/><stop offset="1" stop-color="#2b2f2f"/></linearGradient>
<linearGradient id="gdoc" x1="0" y1="0" x2="0" y2="1"><stop offset="0" stop-color="#dcdcdc"/><stop offset="1" stop-color="#c8c8c8"/></linearGradient>
</defs>
<circle cx="19" cy="1396.3" r="2.3" fill="#fcfcfc"/><circle cx="13.6" cy="1411" r="3.8" fill="#fcfcfc"/><circle cx="23.4" cy="1425.5" r="4.6" fill="#fcfcfc"/>
<path d="M32 1394.5 L44 1405 L32 1415.5" fill="none" stroke="#fcfcfc" stroke-width="5.5" stroke-linejoin="miter" stroke-linecap="butt"/>
<rect x="68" y="1392" width="40" height="39" fill="url(#gset)"/>
<path d="M73 1406.9 H96 M73 1417 H84" stroke="#3daee9" stroke-width="2"/><path d="M96 1406.9 H103 M84 1417 H103" stroke="#4a4a4a" stroke-width="2"/>
<circle cx="96" cy="1406.9" r="2.6" fill="#fcfcfc"/><circle cx="84" cy="1417" r="2.6" fill="#fcfcfc"/>
<rect x="137" y="1398" width="30" height="5" fill="#1d6fa5"/><rect x="134" y="1402" width="36" height="29.5" fill="url(#gdis)"/>
<path d="M144.5 1404 V1399 Q144.5 1392 152 1392 Q159.5 1392 159.5 1399 V1404" fill="none" stroke="#1ab0f0" stroke-width="1.3"/>
<circle cx="144.5" cy="1404.5" r="1.2" fill="none" stroke="#fff" stroke-width="0.8"/><circle cx="159.5" cy="1404.5" r="1.2" fill="none" stroke="#fff" stroke-width="0.8"/>
<path d="M153.5 1412 L157.5 1416 L153.5 1420" fill="none" stroke="#a8d8ff" stroke-width="2.2"/><circle cx="148" cy="1411.8" r="1" fill="#c8e8ff"/><circle cx="145.5" cy="1417.5" r="1.4" fill="#a8d8ff"/><circle cx="150" cy="1425" r="1.9" fill="#a8d8ff"/>
<path d="M196 1394 H211 L213 1397 H236 V1430 H196 Z" fill="#2a7eb0"/><rect x="197" y="1401" width="38" height="8" fill="#f4f4f4"/>
<path d="M196 1409 H209 L211 1407 H236 V1430 H196 Z" fill="#4aaee0"/>
<rect x="260" y="1392" width="40" height="39" fill="url(#gterm)"/><path d="M275 1402.5 L285 1411.5 L275 1420.5" fill="none" stroke="#b8bcbb" stroke-width="1.6"/>
<circle cx="344" cy="1411.7" r="24" fill="#1e8e3e"/>
<path d="M344 1411.7 L324 1400 A24 24 0 0 1 364.8 1399.7 Z" fill="#e33b2e"/>
<path d="M344 1411.7 L364.8 1399.7 A24 24 0 0 1 344 1435.7 Z" fill="#fbbc04"/>
<path d="M344 1411.7 L344 1435.7 A24 24 0 0 1 324 1400 Z" fill="#34a853"/>
<circle cx="344" cy="1411.7" r="11.5" fill="#fff"/><circle cx="344" cy="1411.7" r="9.3" fill="#1a73e8"/>
<circle cx="408" cy="1411.7" r="24" fill="#6ea0f5"/>
<path d="M408 1411.7 L388 1400 A24 24 0 0 1 428.8 1399.7 Z" fill="#1a67d2"/>
<path d="M408 1411.7 L428.8 1399.7 A24 24 0 0 1 408 1435.7 Z" fill="#aecbfa"/>
<circle cx="408" cy="1411.7" r="11.5" fill="#fff"/><circle cx="408" cy="1411.7" r="9.3" fill="#1a73e8"/>
<path d="M455 1390 H478 L489 1401 V1433.6 H455 Z" fill="url(#gdoc)"/><path d="M478 1390 V1401 H489 Z" fill="#eeeeee"/>
<path d="M484 1397 H487 L492 1391 V1407 L487 1402 H484 Z" fill="#fcfcfc"/><path d="M494 1395 Q497 1399 494 1403 M496.5 1392.5 Q501 1399 496.5 1405.5" fill="none" stroke="#fcfcfc" stroke-width="1"/>
<circle cx="536.2" cy="1411.7" r="20" fill="#1ed760"/>
<path d="M522.5 1405 Q537 1400 551 1408 M524 1411 Q536 1407.5 547.5 1413.5 M525.5 1417 Q535.5 1414.5 544.5 1419" fill="none" stroke="#191414" stroke-width="2.6" stroke-linecap="round"/>
<path d="M547 1397 H550 L555 1391 V1407 L550 1402 H547 Z" fill="#fcfcfc"/><path d="M557 1395 Q560 1399 557 1403 M559.5 1392.5 Q564 1399 559.5 1405.5" fill="none" stroke="#fcfcfc" stroke-width="1"/>
<g transform="translate(566.8,1378.4) scale(2.37)"><path d="M4.5 4.5 V23.5 L20 13.5 M4.5 4.5 Q7.5 5.3 9.5 8.3" fill="none" stroke="#000" stroke-width="0.55"/><path d="M11 4.3 H13 L9.6 12.3 Q12 12.3 14.8 12.4 L14.4 13.9 H6.2 Q8 12.9 8.5 11.3 Z" fill="#8b0000"/><path d="M14.5 4.2 H23.5 Q21.2 5.3 20.4 7 L17.3 13.5 H16 L18.6 6.3 Q17 5.6 14.5 5.8 Z" fill="#8b0000"/></g>
<g fill="none" stroke="#fcfcfc" stroke-width="1.3"><path d="M2058.3 1415.8 H2072 L2070 1413 V1409.5 Q2070 1405 2065.2 1404.5 Q2060.4 1405 2060.4 1409.5 V1413 Z"/><path d="M2057.6 1409 Q2057.3 1405.8 2059.6 1403.6 M2059.5 1408 Q2059.6 1406.2 2060.8 1405 M2072.8 1409 Q2073.1 1405.8 2070.8 1403.6 M2070.9 1408 Q2070.8 1406.2 2069.6 1405"/><path d="M2090 1418 A8 8 0 0 1 2099.6 1405.3 M2102.2 1409.5 A8 8 0 0 1 2089.4 1417.2"/><circle cx="2155" cy="1411.9" r="7.8"/><rect x="2178.7" y="1406.7" width="12.8" height="12.9" stroke-width="1.4"/><path d="M2181 1410.5 H2189 M2181 1413.2 H2187 M2181 1416.3 H2184"/><path d="M2210.5 1407 L2219 1415 L2215 1419 V1403.5 L2219 1407.5 L2210.5 1415.5"/><rect x="2240.5" y="1411" width="9" height="8.5"/><rect x="2241.5" y="1404" width="7" height="7"/><path d="M2242.5 1416 H2247.5"/><rect x="2267.5" y="1408" width="15" height="7"/><rect x="2270.5" y="1404" width="9" height="4"/><rect x="2270.5" y="1413" width="9" height="6.5"/><path d="M2325 1406.5 Q2335 1398 2345 1406.5 M2327.5 1410 Q2335 1403.5 2342.5 1410 M2330.5 1413 Q2335 1409.5 2339.5 1413"/><circle cx="2335" cy="1417.5" r="1.2"/><path d="M2387.5 1415.5 L2393.3 1409.3 L2399 1415.5"/><rect x="2515.2" y="1395" width="34" height="34" stroke-width="2"/><path d="M2518.5 1424.6 H2546" stroke-width="2"/></g>
<path d="M2153 1408.2 V1415.6 L2158.8 1411.9 Z" fill="#fcfcfc"/><path d="M2093.6 1415.6 V1409.6 H2091.5 L2095.1 1405.6 L2098.7 1409.6 H2096.6 V1415.6 Z" fill="#fcfcfc"/><circle cx="2100" cy="1417" r="3.2" fill="#3daee9"/><circle cx="2065.2" cy="1418.3" r="1.6" fill="#fcfcfc"/>
<path d="M2297 1408 H2300 L2305.5 1403.5 V1420 L2300 1415.5 H2297 Z" fill="#fcfcfc"/><path d="M2308 1407 Q2310.5 1411.7 2308 1416.5 M2310 1404.5 Q2314.5 1411.7 2310 1419" fill="none" stroke="#fcfcfc" stroke-width="0.9"/>
<rect x="2181" y="1404" width="8" height="3.6" fill="#fcfcfc"/>
</svg>
<div class="a" style="left:2355px;top:1403px;font-size:17px;line-height:20px;color:#fcfcfc">de</div>
<div class="a" style="left:2400px;width:112px;top:1387px;text-align:center;font-size:26px;line-height:30px;color:#fcfcfc">21:10</div>
<div class="a" style="left:2400px;width:112px;top:1414px;text-align:center;font-size:21px;line-height:24px;color:#fcfcfc">06.09.25</div>
</body></html>
